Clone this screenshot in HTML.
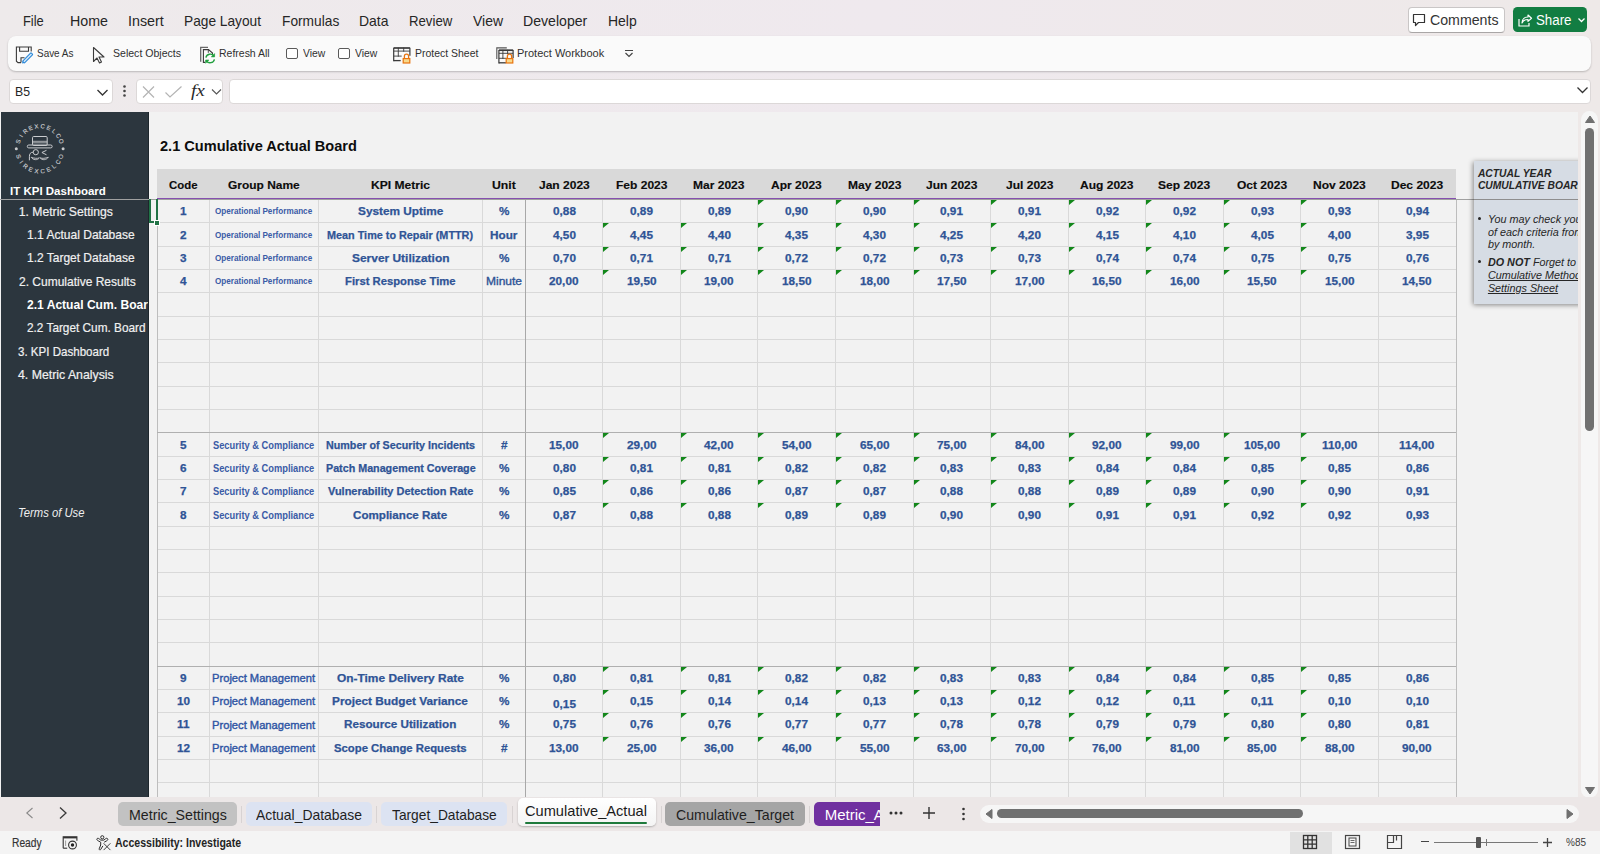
<!DOCTYPE html>
<html><head><meta charset="utf-8"><title>Excel</title>
<style>
html,body{margin:0;padding:0;}
body{width:1600px;height:854px;overflow:hidden;position:relative;background:linear-gradient(to right,#eeeaeb 0%,#efe9ee 55%,#eee9e8 100%);font-family:"Liberation Sans",sans-serif;}
.t{position:absolute;white-space:nowrap;line-height:0;font-family:"Liberation Sans",sans-serif;}
svg{overflow:visible}
</style></head><body>
<div class="t" style="left:22.50px;top:20.77px;font-size:14.5px;color:#262626;transform:scaleX(0.8881);transform-origin:0 0;">File</div>
<div class="t" style="left:70.00px;top:20.77px;font-size:14.5px;color:#262626;transform:scaleX(0.9825);transform-origin:0 0;">Home</div>
<div class="t" style="left:128.00px;top:20.77px;font-size:14.5px;color:#262626;transform:scaleX(0.9858);transform-origin:0 0;">Insert</div>
<div class="t" style="left:184.25px;top:20.77px;font-size:14.5px;color:#262626;transform:scaleX(0.9456);transform-origin:0 0;">Page Layout</div>
<div class="t" style="left:281.75px;top:20.77px;font-size:14.5px;color:#262626;transform:scaleX(0.9474);transform-origin:0 0;">Formulas</div>
<div class="t" style="left:359.25px;top:20.77px;font-size:14.5px;color:#262626;transform:scaleX(0.9632);transform-origin:0 0;">Data</div>
<div class="t" style="left:409.25px;top:20.77px;font-size:14.5px;color:#262626;transform:scaleX(0.9097);transform-origin:0 0;">Review</div>
<div class="t" style="left:473.25px;top:20.77px;font-size:14.5px;color:#262626;transform:scaleX(0.9625);transform-origin:0 0;">View</div>
<div class="t" style="left:523.25px;top:20.77px;font-size:14.5px;color:#262626;transform:scaleX(0.9721);transform-origin:0 0;">Developer</div>
<div class="t" style="left:607.50px;top:20.77px;font-size:14.5px;color:#262626;transform:scaleX(0.9641);transform-origin:0 0;">Help</div>
<div style="position:absolute;left:1407.50px;top:7.00px;width:97.00px;height:25.50px;background:#fff;border:1px solid #c9c6c6;border-bottom-color:#a9a6a6;border-radius:4px;box-sizing:border-box;"></div>
<svg style="position:absolute;left:1412px;top:13px;" width="14" height="14" viewBox="0 0 14 14"><path d="M1.5 1.5h11v8h-6l-3 3v-3h-2z" fill="none" stroke="#333" stroke-width="1.2" stroke-linejoin="round"/></svg>
<div class="t" style="left:1429.50px;top:19.75px;font-size:14px;color:#333333;transform:scaleX(1.0121);transform-origin:0 0;">Comments</div>
<div style="position:absolute;left:1513.20px;top:7.20px;width:74.30px;height:25.00px;background:#127d42;border-radius:4.5px;"></div>
<svg style="position:absolute;left:1517px;top:12px;" width="16" height="16" viewBox="0 0 16 16"><path d="M2 7v7h10v-3" fill="none" stroke="#fff" stroke-width="1.2"/><path d="M5 11c0-4 3-6 6-6V3l3.5 3.2L11 9.4V7.5c-3 0-5 1.3-6 3.5z" fill="none" stroke="#fff" stroke-width="1.2" stroke-linejoin="round"/></svg>
<div class="t" style="left:1535.60px;top:19.95px;font-size:14px;color:#fff;transform:scaleX(0.9503);transform-origin:0 0;">Share</div>
<svg style="position:absolute;left:1577px;top:16px;" width="9" height="8" viewBox="0 0 9 8"><path d="M1.5 2.5l3 3 3-3" fill="none" stroke="#fff" stroke-width="1.3"/></svg>
<div style="position:absolute;left:8.00px;top:36.00px;width:1583.00px;height:35.00px;background:#fafafa;border-radius:8px;box-shadow:0 1px 2px rgba(0,0,0,0.22);"></div>
<svg style="position:absolute;left:0;top:0;overflow:visible" width="1" height="1"><g fill="none" stroke="#3a3a3a" stroke-width="1.1"><path d="M31.2 51.5V47H16.4v14.2l1.6 1.4h3"/><path d="M19.6 47v4.3h8.9V47"/><path d="M21 62.4v-4.6h3.5"/></g><g transform="rotate(-45 27.6 57.8)"><rect x="21.6" y="56.6" width="12" height="2.6" rx="0.6" fill="#d6e9f9" stroke="#2b88d8" stroke-width="1.1"/><path d="M21.6 56.6l-2 1.3 2 1.3z" fill="#2b88d8"/></g></svg>
<div class="t" style="left:37.00px;top:53.49px;font-size:11px;color:#303030;transform:scaleX(0.9032);transform-origin:0 0;">Save As</div>
<svg style="position:absolute;left:92px;top:46px;" width="14" height="18" viewBox="0 0 14 18"><path d="M1.5 1.5v14l3.5-3.5 2.5 5 2-1-2.5-5h5z" fill="#fafafa" stroke="#3b3b3b" stroke-width="1.1" stroke-linejoin="round"/></svg>
<div class="t" style="left:112.50px;top:53.49px;font-size:11px;color:#303030;transform:scaleX(0.9588);transform-origin:0 0;">Select Objects</div>
<svg style="position:absolute;left:0;top:0;overflow:visible" width="1" height="1"><path d="M200.7 61.8V47.4h7.3" fill="none" stroke="#6a6a6a" stroke-width="1.3"/><path d="M205.2 62.4h-1.8V49.6h5.1l4 3.4v2" fill="none" stroke="#3a3a3a" stroke-width="1.1"/><path d="M208.3 49.6v3.2" stroke="#3a3a3a" stroke-width="0.9"/><path d="M205.9 57.6a4.4 4.2 0 0 1 8-1.6" fill="none" stroke="#23a040" stroke-width="1.4"/><path d="M214.6 53.6v3.3h-3.3z" fill="#23a040" stroke="#23a040" stroke-width="0.6"/><path d="M214.4 59.3a4.4 4.2 0 0 1-8 1.6" fill="none" stroke="#23a040" stroke-width="1.4"/><path d="M205.6 63.3v-3.3h3.3z" fill="#23a040" stroke="#23a040" stroke-width="0.6"/></svg>
<div class="t" style="left:219.25px;top:53.49px;font-size:11px;color:#303030;transform:scaleX(0.9527);transform-origin:0 0;">Refresh All</div>
<div style="position:absolute;left:285.75px;top:48.00px;width:11.75px;height:11.25px;border:1px solid #5a5a5a;border-radius:2px;box-sizing:border-box;background:#fff;"></div>
<div class="t" style="left:302.50px;top:53.49px;font-size:11px;color:#303030;transform:scaleX(0.9437);transform-origin:0 0;">View</div>
<div style="position:absolute;left:338.25px;top:48.00px;width:11.25px;height:11.25px;border:1px solid #5a5a5a;border-radius:2px;box-sizing:border-box;background:#fff;"></div>
<div class="t" style="left:355.00px;top:53.49px;font-size:11px;color:#303030;transform:scaleX(0.9437);transform-origin:0 0;">View</div>
<svg style="position:absolute;left:393px;top:46.8px;" width="18" height="17" viewBox="0 0 18 17"><g transform="translate(0,0)" fill="none" stroke="#3a3a3a"><path d="M0.7 1h16.2" stroke-width="1.7"/><path d="M0.7 0.7v13.6M16.9 0.7v8" stroke-width="1.2"/><path d="M5.3 0.7v9M10.7 0.7v4M0.7 4.1h16.2M0.7 9.1h8" stroke-width="0.9"/><path d="M0.7 13.6h7" stroke-width="1.3"/></g><rect x="10.2" y="11.6" width="6.6" height="4.4" fill="#f7d98c" stroke="#e8730e" stroke-width="1.2"/><path d="M11.4 11.6V9.3a2.1 2.1 0 0 1 4.2 0v2.3" fill="none" stroke="#e8730e" stroke-width="1.3"/></svg>
<div class="t" style="left:414.60px;top:53.49px;font-size:11px;color:#303030;transform:scaleX(0.9512);transform-origin:0 0;">Protect Sheet</div>
<svg style="position:absolute;left:495.8px;top:46.6px;" width="18" height="17" viewBox="0 0 18 17"><path d="M0.8 12V0.9h10" fill="none" stroke="#555" stroke-width="1.1"/><g transform="translate(2.2,2.2)" fill="none" stroke="#3a3a3a"><path d="M0.7 1h14.2" stroke-width="1.7"/><path d="M0.7 0.7v13.6M14.899999999999999 0.7v8" stroke-width="1.2"/><path d="M4.7 0.7v9M9.4 0.7v4M0.7 4.1h14.2M0.7 9.1h8" stroke-width="0.9"/><path d="M0.7 13.6h7" stroke-width="1.3"/></g><rect x="10.2" y="11.6" width="6.6" height="4.4" fill="#f7d98c" stroke="#e8730e" stroke-width="1.2"/><path d="M11.4 11.6V9.3a2.1 2.1 0 0 1 4.2 0v2.3" fill="none" stroke="#e8730e" stroke-width="1.3"/></svg>
<div class="t" style="left:517.00px;top:53.49px;font-size:11px;color:#303030;">Protect Workbook</div>
<svg style="position:absolute;left:624px;top:49px;" width="10" height="9" viewBox="0 0 10 9"><path d="M1 1.5h8M1.5 4l3.5 3.5L8.5 4" fill="none" stroke="#444" stroke-width="1.2"/></svg>
<div style="position:absolute;left:9.00px;top:79.00px;width:104.00px;height:24.50px;background:#fff;border:1px solid #dcd8d8;border-radius:4px;box-sizing:border-box;"></div>
<div class="t" style="left:14.75px;top:91.92px;font-size:13.5px;color:#242424;transform:scaleX(0.9084);transform-origin:0 0;">B5</div>
<svg style="position:absolute;left:96px;top:88px;" width="13" height="9" viewBox="0 0 13 9"><path d="M1.5 2l5 5 5-5" fill="none" stroke="#333" stroke-width="1.3"/></svg>
<svg style="position:absolute;left:122px;top:84px;" width="5" height="14" viewBox="0 0 5 14"><circle cx="2.5" cy="2.5" r="1.3" fill="#444"/><circle cx="2.5" cy="7" r="1.3" fill="#444"/><circle cx="2.5" cy="11.5" r="1.3" fill="#444"/></svg>
<div style="position:absolute;left:135.75px;top:79.00px;width:87.50px;height:24.50px;background:#fff;border:1px solid #dcd8d8;border-radius:4px;box-sizing:border-box;"></div>
<svg style="position:absolute;left:141px;top:85px;" width="15" height="14" viewBox="0 0 15 14"><path d="M2 1.5l11 11M13 1.5l-11 11" stroke="#b4b4b4" stroke-width="1.2"/></svg>
<svg style="position:absolute;left:164px;top:85px;" width="19" height="14" viewBox="0 0 19 14"><path d="M1.5 7.5l4.5 4.5L17.5 1.5" fill="none" stroke="#b4b4b4" stroke-width="1.2"/></svg>
<div class="t" style="left:191.00px;top:90.95px;font-size:16px;font-style:italic;color:#2a2a2a;transform:scaleX(1.2053);transform-origin:0 0;font-family:'Liberation Serif',serif;">fx</div>
<svg style="position:absolute;left:211px;top:88px;" width="11" height="8" viewBox="0 0 11 8"><path d="M1 1.5l4.5 4.5 4.5-4.5" fill="none" stroke="#555" stroke-width="1.1"/></svg>
<div style="position:absolute;left:228.75px;top:79.00px;width:1362.25px;height:24.50px;background:#fff;border:1px solid #dcd8d8;border-radius:4px;box-sizing:border-box;"></div>
<svg style="position:absolute;left:1576px;top:86px;" width="13" height="9" viewBox="0 0 13 9"><path d="M1.5 1.5l5 5 5-5" fill="none" stroke="#333" stroke-width="1.3"/></svg>
<div style="position:absolute;left:0.00px;top:112.00px;width:1578.00px;height:685.40px;background:#f2f2f2;"></div>
<div style="position:absolute;left:1.00px;top:111.50px;width:147.60px;height:685.90px;background:#2c363e;border-right:1px solid #1d262c;box-sizing:border-box;"></div>
<div style="position:absolute;left:157.00px;top:169.00px;width:1299.00px;height:30.00px;background:#d9d9d9;"></div>
<div style="position:absolute;left:157.00px;top:222.33px;width:1299.00px;height:1.00px;background:#d9d9d9;"></div>
<div style="position:absolute;left:157.00px;top:245.66px;width:1299.00px;height:1.00px;background:#d9d9d9;"></div>
<div style="position:absolute;left:157.00px;top:268.99px;width:1299.00px;height:1.00px;background:#d9d9d9;"></div>
<div style="position:absolute;left:157.00px;top:292.32px;width:1299.00px;height:1.00px;background:#d9d9d9;"></div>
<div style="position:absolute;left:157.00px;top:315.65px;width:1299.00px;height:1.00px;background:#d9d9d9;"></div>
<div style="position:absolute;left:157.00px;top:338.98px;width:1299.00px;height:1.00px;background:#d9d9d9;"></div>
<div style="position:absolute;left:157.00px;top:362.31px;width:1299.00px;height:1.00px;background:#d9d9d9;"></div>
<div style="position:absolute;left:157.00px;top:385.64px;width:1299.00px;height:1.00px;background:#d9d9d9;"></div>
<div style="position:absolute;left:157.00px;top:408.97px;width:1299.00px;height:1.00px;background:#d9d9d9;"></div>
<div style="position:absolute;left:157.00px;top:432.30px;width:1299.00px;height:1.00px;background:#d9d9d9;"></div>
<div style="position:absolute;left:157.00px;top:455.63px;width:1299.00px;height:1.00px;background:#d9d9d9;"></div>
<div style="position:absolute;left:157.00px;top:478.96px;width:1299.00px;height:1.00px;background:#d9d9d9;"></div>
<div style="position:absolute;left:157.00px;top:502.29px;width:1299.00px;height:1.00px;background:#d9d9d9;"></div>
<div style="position:absolute;left:157.00px;top:525.62px;width:1299.00px;height:1.00px;background:#d9d9d9;"></div>
<div style="position:absolute;left:157.00px;top:548.95px;width:1299.00px;height:1.00px;background:#d9d9d9;"></div>
<div style="position:absolute;left:157.00px;top:572.28px;width:1299.00px;height:1.00px;background:#d9d9d9;"></div>
<div style="position:absolute;left:157.00px;top:595.61px;width:1299.00px;height:1.00px;background:#d9d9d9;"></div>
<div style="position:absolute;left:157.00px;top:618.94px;width:1299.00px;height:1.00px;background:#d9d9d9;"></div>
<div style="position:absolute;left:157.00px;top:642.27px;width:1299.00px;height:1.00px;background:#d9d9d9;"></div>
<div style="position:absolute;left:157.00px;top:665.60px;width:1299.00px;height:1.00px;background:#d9d9d9;"></div>
<div style="position:absolute;left:157.00px;top:688.93px;width:1299.00px;height:1.00px;background:#d9d9d9;"></div>
<div style="position:absolute;left:157.00px;top:712.26px;width:1299.00px;height:1.00px;background:#d9d9d9;"></div>
<div style="position:absolute;left:157.00px;top:735.59px;width:1299.00px;height:1.00px;background:#d9d9d9;"></div>
<div style="position:absolute;left:157.00px;top:758.92px;width:1299.00px;height:1.00px;background:#d9d9d9;"></div>
<div style="position:absolute;left:157.00px;top:782.25px;width:1299.00px;height:1.00px;background:#d9d9d9;"></div>
<div style="position:absolute;left:156.50px;top:199.00px;width:1.00px;height:598.40px;background:#bdbdbd;"></div>
<div style="position:absolute;left:208.80px;top:199.00px;width:1.00px;height:598.40px;background:#d9d9d9;"></div>
<div style="position:absolute;left:318.10px;top:199.00px;width:1.00px;height:598.40px;background:#d9d9d9;"></div>
<div style="position:absolute;left:482.00px;top:199.00px;width:1.00px;height:598.40px;background:#d9d9d9;"></div>
<div style="position:absolute;left:524.80px;top:199.00px;width:1.00px;height:598.40px;background:#a8a8a8;"></div>
<div style="position:absolute;left:602.36px;top:199.00px;width:1.00px;height:598.40px;background:#d9d9d9;"></div>
<div style="position:absolute;left:679.92px;top:199.00px;width:1.00px;height:598.40px;background:#d9d9d9;"></div>
<div style="position:absolute;left:757.47px;top:199.00px;width:1.00px;height:598.40px;background:#d9d9d9;"></div>
<div style="position:absolute;left:835.03px;top:199.00px;width:1.00px;height:598.40px;background:#d9d9d9;"></div>
<div style="position:absolute;left:912.59px;top:199.00px;width:1.00px;height:598.40px;background:#d9d9d9;"></div>
<div style="position:absolute;left:990.15px;top:199.00px;width:1.00px;height:598.40px;background:#d9d9d9;"></div>
<div style="position:absolute;left:1067.71px;top:199.00px;width:1.00px;height:598.40px;background:#d9d9d9;"></div>
<div style="position:absolute;left:1145.27px;top:199.00px;width:1.00px;height:598.40px;background:#d9d9d9;"></div>
<div style="position:absolute;left:1222.83px;top:199.00px;width:1.00px;height:598.40px;background:#d9d9d9;"></div>
<div style="position:absolute;left:1300.38px;top:199.00px;width:1.00px;height:598.40px;background:#d9d9d9;"></div>
<div style="position:absolute;left:1377.94px;top:199.00px;width:1.00px;height:598.40px;background:#d9d9d9;"></div>
<div style="position:absolute;left:1455.50px;top:199.00px;width:1.00px;height:598.40px;background:#bdbdbd;"></div>
<div style="position:absolute;left:157.00px;top:432.20px;width:1299.00px;height:1.20px;background:#b0b0b0;"></div>
<div style="position:absolute;left:157.00px;top:665.50px;width:1299.00px;height:1.20px;background:#b0b0b0;"></div>
<div style="position:absolute;left:0.00px;top:198.60px;width:1578.00px;height:1.00px;background:#a0a0a0;"></div>
<div style="position:absolute;left:157.00px;top:197.60px;width:1299.00px;height:1.90px;background:#8650b0;"></div>
<div class="t" style="left:168.90px;top:184.91px;font-size:11.5px;font-weight:700;color:#0d0d0d;transform:scaleX(0.9913);transform-origin:0 0;-webkit-text-stroke:0.15px #0d0d0d;">Code</div>
<div class="t" style="left:228.10px;top:184.91px;font-size:11.5px;font-weight:700;color:#0d0d0d;transform:scaleX(1.0390);transform-origin:0 0;-webkit-text-stroke:0.15px #0d0d0d;">Group Name</div>
<div class="t" style="left:371.05px;top:184.91px;font-size:11.5px;font-weight:700;color:#0d0d0d;transform:scaleX(1.0491);transform-origin:0 0;-webkit-text-stroke:0.15px #0d0d0d;">KPI Metric</div>
<div class="t" style="left:492.00px;top:184.91px;font-size:11.5px;font-weight:700;color:#0d0d0d;transform:scaleX(1.0647);transform-origin:0 0;-webkit-text-stroke:0.15px #0d0d0d;">Unit</div>
<div class="t" style="left:538.69px;top:184.91px;font-size:11.5px;font-weight:700;color:#0d0d0d;transform:scaleX(1.0450);transform-origin:0 0;-webkit-text-stroke:0.15px #0d0d0d;">Jan 2023</div>
<div class="t" style="left:615.92px;top:184.91px;font-size:11.5px;font-weight:700;color:#0d0d0d;transform:scaleX(1.0450);transform-origin:0 0;-webkit-text-stroke:0.15px #0d0d0d;">Feb 2023</div>
<div class="t" style="left:693.47px;top:184.91px;font-size:11.5px;font-weight:700;color:#0d0d0d;transform:scaleX(1.0450);transform-origin:0 0;-webkit-text-stroke:0.15px #0d0d0d;">Mar 2023</div>
<div class="t" style="left:771.37px;top:184.91px;font-size:11.5px;font-weight:700;color:#0d0d0d;transform:scaleX(1.0450);transform-origin:0 0;-webkit-text-stroke:0.15px #0d0d0d;">Apr 2023</div>
<div class="t" style="left:847.59px;top:184.91px;font-size:11.5px;font-weight:700;color:#0d0d0d;transform:scaleX(1.0450);transform-origin:0 0;-webkit-text-stroke:0.15px #0d0d0d;">May 2023</div>
<div class="t" style="left:926.15px;top:184.91px;font-size:11.5px;font-weight:700;color:#0d0d0d;transform:scaleX(1.0450);transform-origin:0 0;-webkit-text-stroke:0.15px #0d0d0d;">Jun 2023</div>
<div class="t" style="left:1005.71px;top:184.91px;font-size:11.5px;font-weight:700;color:#0d0d0d;transform:scaleX(1.0450);transform-origin:0 0;-webkit-text-stroke:0.15px #0d0d0d;">Jul 2023</div>
<div class="t" style="left:1080.27px;top:184.91px;font-size:11.5px;font-weight:700;color:#0d0d0d;transform:scaleX(1.0450);transform-origin:0 0;-webkit-text-stroke:0.15px #0d0d0d;">Aug 2023</div>
<div class="t" style="left:1158.49px;top:184.91px;font-size:11.5px;font-weight:700;color:#0d0d0d;transform:scaleX(1.0450);transform-origin:0 0;-webkit-text-stroke:0.15px #0d0d0d;">Sep 2023</div>
<div class="t" style="left:1237.05px;top:184.91px;font-size:11.5px;font-weight:700;color:#0d0d0d;transform:scaleX(1.0450);transform-origin:0 0;-webkit-text-stroke:0.15px #0d0d0d;">Oct 2023</div>
<div class="t" style="left:1313.27px;top:184.91px;font-size:11.5px;font-weight:700;color:#0d0d0d;transform:scaleX(1.0450);transform-origin:0 0;-webkit-text-stroke:0.15px #0d0d0d;">Nov 2023</div>
<div class="t" style="left:1391.16px;top:184.91px;font-size:11.5px;font-weight:700;color:#0d0d0d;transform:scaleX(1.0450);transform-origin:0 0;-webkit-text-stroke:0.15px #0d0d0d;">Dec 2023</div>
<div class="t" style="left:179.88px;top:211.22px;font-size:11.2px;font-weight:700;color:#2f5496;transform:scaleX(1.0500);transform-origin:0 0;-webkit-text-stroke:0.25px #2f5496;">1</div>
<div class="t" style="left:215.35px;top:211.22px;font-size:8.3px;font-weight:700;color:#3a5ba6;transform:scaleX(0.9801);transform-origin:0 0;">Operational Performance</div>
<div class="t" style="left:357.85px;top:211.22px;font-size:11.2px;font-weight:700;color:#2f5496;transform:scaleX(1.0554);transform-origin:0 0;-webkit-text-stroke:0.25px #2f5496;">System Uptime</div>
<div class="t" style="left:498.67px;top:211.22px;font-size:11.2px;font-weight:700;color:#2f5496;transform:scaleX(1.0500);transform-origin:0 0;-webkit-text-stroke:0.25px #2f5496;">%</div>
<div class="t" style="left:552.60px;top:211.22px;font-size:11.2px;font-weight:700;color:#2f5496;transform:scaleX(1.0530);transform-origin:0 0;-webkit-text-stroke:0.25px #2f5496;">0,88</div>
<div class="t" style="left:630.16px;top:211.22px;font-size:11.2px;font-weight:700;color:#2f5496;transform:scaleX(1.0530);transform-origin:0 0;-webkit-text-stroke:0.25px #2f5496;">0,89</div>
<div class="t" style="left:707.72px;top:211.22px;font-size:11.2px;font-weight:700;color:#2f5496;transform:scaleX(1.0530);transform-origin:0 0;-webkit-text-stroke:0.25px #2f5496;">0,89</div>
<div class="t" style="left:785.28px;top:211.22px;font-size:11.2px;font-weight:700;color:#2f5496;transform:scaleX(1.0530);transform-origin:0 0;-webkit-text-stroke:0.25px #2f5496;">0,90</div>
<div class="t" style="left:862.84px;top:211.22px;font-size:11.2px;font-weight:700;color:#2f5496;transform:scaleX(1.0530);transform-origin:0 0;-webkit-text-stroke:0.25px #2f5496;">0,90</div>
<div class="t" style="left:940.39px;top:211.22px;font-size:11.2px;font-weight:700;color:#2f5496;transform:scaleX(1.0530);transform-origin:0 0;-webkit-text-stroke:0.25px #2f5496;">0,91</div>
<div class="t" style="left:1017.95px;top:211.22px;font-size:11.2px;font-weight:700;color:#2f5496;transform:scaleX(1.0530);transform-origin:0 0;-webkit-text-stroke:0.25px #2f5496;">0,91</div>
<div class="t" style="left:1095.51px;top:211.22px;font-size:11.2px;font-weight:700;color:#2f5496;transform:scaleX(1.0530);transform-origin:0 0;-webkit-text-stroke:0.25px #2f5496;">0,92</div>
<div class="t" style="left:1173.07px;top:211.22px;font-size:11.2px;font-weight:700;color:#2f5496;transform:scaleX(1.0530);transform-origin:0 0;-webkit-text-stroke:0.25px #2f5496;">0,92</div>
<div class="t" style="left:1250.63px;top:211.22px;font-size:11.2px;font-weight:700;color:#2f5496;transform:scaleX(1.0530);transform-origin:0 0;-webkit-text-stroke:0.25px #2f5496;">0,93</div>
<div class="t" style="left:1328.19px;top:211.22px;font-size:11.2px;font-weight:700;color:#2f5496;transform:scaleX(1.0530);transform-origin:0 0;-webkit-text-stroke:0.25px #2f5496;">0,93</div>
<div class="t" style="left:1405.74px;top:211.22px;font-size:11.2px;font-weight:700;color:#2f5496;transform:scaleX(1.0530);transform-origin:0 0;-webkit-text-stroke:0.25px #2f5496;">0,94</div>
<svg style="position:absolute;left:758.4749999999999px;top:200px;" width="6" height="5" viewBox="0 0 6 5"><path d="M0 0h6L0 5z" fill="#12871a"/></svg>
<svg style="position:absolute;left:836.0333333333333px;top:200px;" width="6" height="5" viewBox="0 0 6 5"><path d="M0 0h6L0 5z" fill="#12871a"/></svg>
<svg style="position:absolute;left:913.5916666666667px;top:200px;" width="6" height="5" viewBox="0 0 6 5"><path d="M0 0h6L0 5z" fill="#12871a"/></svg>
<svg style="position:absolute;left:991.15px;top:200px;" width="6" height="5" viewBox="0 0 6 5"><path d="M0 0h6L0 5z" fill="#12871a"/></svg>
<svg style="position:absolute;left:1068.7083333333333px;top:200px;" width="6" height="5" viewBox="0 0 6 5"><path d="M0 0h6L0 5z" fill="#12871a"/></svg>
<svg style="position:absolute;left:1146.2666666666667px;top:200px;" width="6" height="5" viewBox="0 0 6 5"><path d="M0 0h6L0 5z" fill="#12871a"/></svg>
<svg style="position:absolute;left:1223.825px;top:200px;" width="6" height="5" viewBox="0 0 6 5"><path d="M0 0h6L0 5z" fill="#12871a"/></svg>
<svg style="position:absolute;left:1301.3833333333332px;top:200px;" width="6" height="5" viewBox="0 0 6 5"><path d="M0 0h6L0 5z" fill="#12871a"/></svg>
<div class="t" style="left:179.88px;top:234.55px;font-size:11.2px;font-weight:700;color:#2f5496;transform:scaleX(1.0500);transform-origin:0 0;-webkit-text-stroke:0.25px #2f5496;">2</div>
<div class="t" style="left:215.35px;top:234.55px;font-size:8.3px;font-weight:700;color:#3a5ba6;transform:scaleX(0.9801);transform-origin:0 0;">Operational Performance</div>
<div class="t" style="left:327.35px;top:234.55px;font-size:11.2px;font-weight:700;color:#2f5496;transform:scaleX(0.9682);transform-origin:0 0;-webkit-text-stroke:0.25px #2f5496;">Mean Time to Repair (MTTR)</div>
<div class="t" style="left:490.18px;top:234.55px;font-size:11.2px;font-weight:700;color:#2f5496;transform:scaleX(1.0500);transform-origin:0 0;-webkit-text-stroke:0.25px #2f5496;">Hour</div>
<div class="t" style="left:552.60px;top:234.55px;font-size:11.2px;font-weight:700;color:#2f5496;transform:scaleX(1.0530);transform-origin:0 0;-webkit-text-stroke:0.25px #2f5496;">4,50</div>
<div class="t" style="left:630.16px;top:234.55px;font-size:11.2px;font-weight:700;color:#2f5496;transform:scaleX(1.0530);transform-origin:0 0;-webkit-text-stroke:0.25px #2f5496;">4,45</div>
<div class="t" style="left:707.72px;top:234.55px;font-size:11.2px;font-weight:700;color:#2f5496;transform:scaleX(1.0530);transform-origin:0 0;-webkit-text-stroke:0.25px #2f5496;">4,40</div>
<div class="t" style="left:785.28px;top:234.55px;font-size:11.2px;font-weight:700;color:#2f5496;transform:scaleX(1.0530);transform-origin:0 0;-webkit-text-stroke:0.25px #2f5496;">4,35</div>
<div class="t" style="left:862.84px;top:234.55px;font-size:11.2px;font-weight:700;color:#2f5496;transform:scaleX(1.0530);transform-origin:0 0;-webkit-text-stroke:0.25px #2f5496;">4,30</div>
<div class="t" style="left:940.39px;top:234.55px;font-size:11.2px;font-weight:700;color:#2f5496;transform:scaleX(1.0530);transform-origin:0 0;-webkit-text-stroke:0.25px #2f5496;">4,25</div>
<div class="t" style="left:1017.95px;top:234.55px;font-size:11.2px;font-weight:700;color:#2f5496;transform:scaleX(1.0530);transform-origin:0 0;-webkit-text-stroke:0.25px #2f5496;">4,20</div>
<div class="t" style="left:1095.51px;top:234.55px;font-size:11.2px;font-weight:700;color:#2f5496;transform:scaleX(1.0530);transform-origin:0 0;-webkit-text-stroke:0.25px #2f5496;">4,15</div>
<div class="t" style="left:1173.07px;top:234.55px;font-size:11.2px;font-weight:700;color:#2f5496;transform:scaleX(1.0530);transform-origin:0 0;-webkit-text-stroke:0.25px #2f5496;">4,10</div>
<div class="t" style="left:1250.63px;top:234.55px;font-size:11.2px;font-weight:700;color:#2f5496;transform:scaleX(1.0530);transform-origin:0 0;-webkit-text-stroke:0.25px #2f5496;">4,05</div>
<div class="t" style="left:1328.19px;top:234.55px;font-size:11.2px;font-weight:700;color:#2f5496;transform:scaleX(1.0530);transform-origin:0 0;-webkit-text-stroke:0.25px #2f5496;">4,00</div>
<div class="t" style="left:1405.74px;top:234.55px;font-size:11.2px;font-weight:700;color:#2f5496;transform:scaleX(1.0530);transform-origin:0 0;-webkit-text-stroke:0.25px #2f5496;">3,95</div>
<svg style="position:absolute;left:603.3583333333333px;top:223px;" width="6" height="5" viewBox="0 0 6 5"><path d="M0 0h6L0 5z" fill="#12871a"/></svg>
<svg style="position:absolute;left:680.9166666666666px;top:223px;" width="6" height="5" viewBox="0 0 6 5"><path d="M0 0h6L0 5z" fill="#12871a"/></svg>
<svg style="position:absolute;left:758.4749999999999px;top:223px;" width="6" height="5" viewBox="0 0 6 5"><path d="M0 0h6L0 5z" fill="#12871a"/></svg>
<svg style="position:absolute;left:836.0333333333333px;top:223px;" width="6" height="5" viewBox="0 0 6 5"><path d="M0 0h6L0 5z" fill="#12871a"/></svg>
<svg style="position:absolute;left:913.5916666666667px;top:223px;" width="6" height="5" viewBox="0 0 6 5"><path d="M0 0h6L0 5z" fill="#12871a"/></svg>
<svg style="position:absolute;left:991.15px;top:223px;" width="6" height="5" viewBox="0 0 6 5"><path d="M0 0h6L0 5z" fill="#12871a"/></svg>
<svg style="position:absolute;left:1068.7083333333333px;top:223px;" width="6" height="5" viewBox="0 0 6 5"><path d="M0 0h6L0 5z" fill="#12871a"/></svg>
<svg style="position:absolute;left:1146.2666666666667px;top:223px;" width="6" height="5" viewBox="0 0 6 5"><path d="M0 0h6L0 5z" fill="#12871a"/></svg>
<svg style="position:absolute;left:1223.825px;top:223px;" width="6" height="5" viewBox="0 0 6 5"><path d="M0 0h6L0 5z" fill="#12871a"/></svg>
<svg style="position:absolute;left:1301.3833333333332px;top:223px;" width="6" height="5" viewBox="0 0 6 5"><path d="M0 0h6L0 5z" fill="#12871a"/></svg>
<div class="t" style="left:179.88px;top:257.88px;font-size:11.2px;font-weight:700;color:#2f5496;transform:scaleX(1.0500);transform-origin:0 0;-webkit-text-stroke:0.25px #2f5496;">3</div>
<div class="t" style="left:215.35px;top:257.88px;font-size:8.3px;font-weight:700;color:#3a5ba6;transform:scaleX(0.9801);transform-origin:0 0;">Operational Performance</div>
<div class="t" style="left:351.75px;top:257.88px;font-size:11.2px;font-weight:700;color:#2f5496;transform:scaleX(1.0668);transform-origin:0 0;-webkit-text-stroke:0.25px #2f5496;">Server Utilization</div>
<div class="t" style="left:498.67px;top:257.88px;font-size:11.2px;font-weight:700;color:#2f5496;transform:scaleX(1.0500);transform-origin:0 0;-webkit-text-stroke:0.25px #2f5496;">%</div>
<div class="t" style="left:552.60px;top:257.88px;font-size:11.2px;font-weight:700;color:#2f5496;transform:scaleX(1.0530);transform-origin:0 0;-webkit-text-stroke:0.25px #2f5496;">0,70</div>
<div class="t" style="left:630.16px;top:257.88px;font-size:11.2px;font-weight:700;color:#2f5496;transform:scaleX(1.0530);transform-origin:0 0;-webkit-text-stroke:0.25px #2f5496;">0,71</div>
<div class="t" style="left:707.72px;top:257.88px;font-size:11.2px;font-weight:700;color:#2f5496;transform:scaleX(1.0530);transform-origin:0 0;-webkit-text-stroke:0.25px #2f5496;">0,71</div>
<div class="t" style="left:785.28px;top:257.88px;font-size:11.2px;font-weight:700;color:#2f5496;transform:scaleX(1.0530);transform-origin:0 0;-webkit-text-stroke:0.25px #2f5496;">0,72</div>
<div class="t" style="left:862.84px;top:257.88px;font-size:11.2px;font-weight:700;color:#2f5496;transform:scaleX(1.0530);transform-origin:0 0;-webkit-text-stroke:0.25px #2f5496;">0,72</div>
<div class="t" style="left:940.39px;top:257.88px;font-size:11.2px;font-weight:700;color:#2f5496;transform:scaleX(1.0530);transform-origin:0 0;-webkit-text-stroke:0.25px #2f5496;">0,73</div>
<div class="t" style="left:1017.95px;top:257.88px;font-size:11.2px;font-weight:700;color:#2f5496;transform:scaleX(1.0530);transform-origin:0 0;-webkit-text-stroke:0.25px #2f5496;">0,73</div>
<div class="t" style="left:1095.51px;top:257.88px;font-size:11.2px;font-weight:700;color:#2f5496;transform:scaleX(1.0530);transform-origin:0 0;-webkit-text-stroke:0.25px #2f5496;">0,74</div>
<div class="t" style="left:1173.07px;top:257.88px;font-size:11.2px;font-weight:700;color:#2f5496;transform:scaleX(1.0530);transform-origin:0 0;-webkit-text-stroke:0.25px #2f5496;">0,74</div>
<div class="t" style="left:1250.63px;top:257.88px;font-size:11.2px;font-weight:700;color:#2f5496;transform:scaleX(1.0530);transform-origin:0 0;-webkit-text-stroke:0.25px #2f5496;">0,75</div>
<div class="t" style="left:1328.19px;top:257.88px;font-size:11.2px;font-weight:700;color:#2f5496;transform:scaleX(1.0530);transform-origin:0 0;-webkit-text-stroke:0.25px #2f5496;">0,75</div>
<div class="t" style="left:1405.74px;top:257.88px;font-size:11.2px;font-weight:700;color:#2f5496;transform:scaleX(1.0530);transform-origin:0 0;-webkit-text-stroke:0.25px #2f5496;">0,76</div>
<svg style="position:absolute;left:603.3583333333333px;top:247px;" width="6" height="5" viewBox="0 0 6 5"><path d="M0 0h6L0 5z" fill="#12871a"/></svg>
<svg style="position:absolute;left:680.9166666666666px;top:247px;" width="6" height="5" viewBox="0 0 6 5"><path d="M0 0h6L0 5z" fill="#12871a"/></svg>
<svg style="position:absolute;left:758.4749999999999px;top:247px;" width="6" height="5" viewBox="0 0 6 5"><path d="M0 0h6L0 5z" fill="#12871a"/></svg>
<svg style="position:absolute;left:836.0333333333333px;top:247px;" width="6" height="5" viewBox="0 0 6 5"><path d="M0 0h6L0 5z" fill="#12871a"/></svg>
<svg style="position:absolute;left:913.5916666666667px;top:247px;" width="6" height="5" viewBox="0 0 6 5"><path d="M0 0h6L0 5z" fill="#12871a"/></svg>
<svg style="position:absolute;left:991.15px;top:247px;" width="6" height="5" viewBox="0 0 6 5"><path d="M0 0h6L0 5z" fill="#12871a"/></svg>
<svg style="position:absolute;left:1068.7083333333333px;top:247px;" width="6" height="5" viewBox="0 0 6 5"><path d="M0 0h6L0 5z" fill="#12871a"/></svg>
<svg style="position:absolute;left:1146.2666666666667px;top:247px;" width="6" height="5" viewBox="0 0 6 5"><path d="M0 0h6L0 5z" fill="#12871a"/></svg>
<svg style="position:absolute;left:1223.825px;top:247px;" width="6" height="5" viewBox="0 0 6 5"><path d="M0 0h6L0 5z" fill="#12871a"/></svg>
<svg style="position:absolute;left:1301.3833333333332px;top:247px;" width="6" height="5" viewBox="0 0 6 5"><path d="M0 0h6L0 5z" fill="#12871a"/></svg>
<div class="t" style="left:179.88px;top:281.21px;font-size:11.2px;font-weight:700;color:#2f5496;transform:scaleX(1.0500);transform-origin:0 0;-webkit-text-stroke:0.25px #2f5496;">4</div>
<div class="t" style="left:215.35px;top:281.21px;font-size:8.3px;font-weight:700;color:#3a5ba6;transform:scaleX(0.9801);transform-origin:0 0;">Operational Performance</div>
<div class="t" style="left:345.10px;top:281.21px;font-size:11.2px;font-weight:700;color:#2f5496;transform:scaleX(1.0067);transform-origin:0 0;-webkit-text-stroke:0.25px #2f5496;">First Response Time</div>
<div class="t" style="left:485.90px;top:281.28px;font-size:11px;color:#2f5496;transform:scaleX(1.0904);transform-origin:0 0;-webkit-text-stroke:0.35px #2f5496;">Minute</div>
<div class="t" style="left:549.32px;top:281.21px;font-size:11.2px;font-weight:700;color:#2f5496;transform:scaleX(1.0530);transform-origin:0 0;-webkit-text-stroke:0.25px #2f5496;">20,00</div>
<div class="t" style="left:626.88px;top:281.21px;font-size:11.2px;font-weight:700;color:#2f5496;transform:scaleX(1.0530);transform-origin:0 0;-webkit-text-stroke:0.25px #2f5496;">19,50</div>
<div class="t" style="left:704.44px;top:281.21px;font-size:11.2px;font-weight:700;color:#2f5496;transform:scaleX(1.0530);transform-origin:0 0;-webkit-text-stroke:0.25px #2f5496;">19,00</div>
<div class="t" style="left:782.00px;top:281.21px;font-size:11.2px;font-weight:700;color:#2f5496;transform:scaleX(1.0530);transform-origin:0 0;-webkit-text-stroke:0.25px #2f5496;">18,50</div>
<div class="t" style="left:859.56px;top:281.21px;font-size:11.2px;font-weight:700;color:#2f5496;transform:scaleX(1.0530);transform-origin:0 0;-webkit-text-stroke:0.25px #2f5496;">18,00</div>
<div class="t" style="left:937.11px;top:281.21px;font-size:11.2px;font-weight:700;color:#2f5496;transform:scaleX(1.0530);transform-origin:0 0;-webkit-text-stroke:0.25px #2f5496;">17,50</div>
<div class="t" style="left:1014.67px;top:281.21px;font-size:11.2px;font-weight:700;color:#2f5496;transform:scaleX(1.0530);transform-origin:0 0;-webkit-text-stroke:0.25px #2f5496;">17,00</div>
<div class="t" style="left:1092.23px;top:281.21px;font-size:11.2px;font-weight:700;color:#2f5496;transform:scaleX(1.0530);transform-origin:0 0;-webkit-text-stroke:0.25px #2f5496;">16,50</div>
<div class="t" style="left:1169.79px;top:281.21px;font-size:11.2px;font-weight:700;color:#2f5496;transform:scaleX(1.0530);transform-origin:0 0;-webkit-text-stroke:0.25px #2f5496;">16,00</div>
<div class="t" style="left:1247.35px;top:281.21px;font-size:11.2px;font-weight:700;color:#2f5496;transform:scaleX(1.0530);transform-origin:0 0;-webkit-text-stroke:0.25px #2f5496;">15,50</div>
<div class="t" style="left:1324.91px;top:281.21px;font-size:11.2px;font-weight:700;color:#2f5496;transform:scaleX(1.0530);transform-origin:0 0;-webkit-text-stroke:0.25px #2f5496;">15,00</div>
<div class="t" style="left:1402.46px;top:281.21px;font-size:11.2px;font-weight:700;color:#2f5496;transform:scaleX(1.0530);transform-origin:0 0;-webkit-text-stroke:0.25px #2f5496;">14,50</div>
<svg style="position:absolute;left:603.3583333333333px;top:270px;" width="6" height="5" viewBox="0 0 6 5"><path d="M0 0h6L0 5z" fill="#12871a"/></svg>
<svg style="position:absolute;left:680.9166666666666px;top:270px;" width="6" height="5" viewBox="0 0 6 5"><path d="M0 0h6L0 5z" fill="#12871a"/></svg>
<svg style="position:absolute;left:758.4749999999999px;top:270px;" width="6" height="5" viewBox="0 0 6 5"><path d="M0 0h6L0 5z" fill="#12871a"/></svg>
<svg style="position:absolute;left:836.0333333333333px;top:270px;" width="6" height="5" viewBox="0 0 6 5"><path d="M0 0h6L0 5z" fill="#12871a"/></svg>
<svg style="position:absolute;left:913.5916666666667px;top:270px;" width="6" height="5" viewBox="0 0 6 5"><path d="M0 0h6L0 5z" fill="#12871a"/></svg>
<svg style="position:absolute;left:991.15px;top:270px;" width="6" height="5" viewBox="0 0 6 5"><path d="M0 0h6L0 5z" fill="#12871a"/></svg>
<svg style="position:absolute;left:1068.7083333333333px;top:270px;" width="6" height="5" viewBox="0 0 6 5"><path d="M0 0h6L0 5z" fill="#12871a"/></svg>
<svg style="position:absolute;left:1146.2666666666667px;top:270px;" width="6" height="5" viewBox="0 0 6 5"><path d="M0 0h6L0 5z" fill="#12871a"/></svg>
<svg style="position:absolute;left:1223.825px;top:270px;" width="6" height="5" viewBox="0 0 6 5"><path d="M0 0h6L0 5z" fill="#12871a"/></svg>
<svg style="position:absolute;left:1301.3833333333332px;top:270px;" width="6" height="5" viewBox="0 0 6 5"><path d="M0 0h6L0 5z" fill="#12871a"/></svg>
<div class="t" style="left:179.88px;top:444.52px;font-size:11.2px;font-weight:700;color:#2f5496;transform:scaleX(1.0500);transform-origin:0 0;-webkit-text-stroke:0.25px #2f5496;">5</div>
<div class="t" style="left:213.30px;top:445.83px;font-size:10.3px;font-weight:700;color:#3a5ba6;transform:scaleX(0.9029);transform-origin:0 0;">Security &amp; Compliance</div>
<div class="t" style="left:325.95px;top:444.52px;font-size:11.2px;font-weight:700;color:#2f5496;transform:scaleX(0.9590);transform-origin:0 0;-webkit-text-stroke:0.25px #2f5496;">Number of Security Incidents</div>
<div class="t" style="left:500.63px;top:444.52px;font-size:11.2px;font-weight:700;color:#2f5496;transform:scaleX(1.0500);transform-origin:0 0;-webkit-text-stroke:0.25px #2f5496;">#</div>
<div class="t" style="left:549.32px;top:444.52px;font-size:11.2px;font-weight:700;color:#2f5496;transform:scaleX(1.0530);transform-origin:0 0;-webkit-text-stroke:0.25px #2f5496;">15,00</div>
<div class="t" style="left:626.88px;top:444.52px;font-size:11.2px;font-weight:700;color:#2f5496;transform:scaleX(1.0530);transform-origin:0 0;-webkit-text-stroke:0.25px #2f5496;">29,00</div>
<div class="t" style="left:704.44px;top:444.52px;font-size:11.2px;font-weight:700;color:#2f5496;transform:scaleX(1.0530);transform-origin:0 0;-webkit-text-stroke:0.25px #2f5496;">42,00</div>
<div class="t" style="left:782.00px;top:444.52px;font-size:11.2px;font-weight:700;color:#2f5496;transform:scaleX(1.0530);transform-origin:0 0;-webkit-text-stroke:0.25px #2f5496;">54,00</div>
<div class="t" style="left:859.56px;top:444.52px;font-size:11.2px;font-weight:700;color:#2f5496;transform:scaleX(1.0530);transform-origin:0 0;-webkit-text-stroke:0.25px #2f5496;">65,00</div>
<div class="t" style="left:937.11px;top:444.52px;font-size:11.2px;font-weight:700;color:#2f5496;transform:scaleX(1.0530);transform-origin:0 0;-webkit-text-stroke:0.25px #2f5496;">75,00</div>
<div class="t" style="left:1014.67px;top:444.52px;font-size:11.2px;font-weight:700;color:#2f5496;transform:scaleX(1.0530);transform-origin:0 0;-webkit-text-stroke:0.25px #2f5496;">84,00</div>
<div class="t" style="left:1092.23px;top:444.52px;font-size:11.2px;font-weight:700;color:#2f5496;transform:scaleX(1.0530);transform-origin:0 0;-webkit-text-stroke:0.25px #2f5496;">92,00</div>
<div class="t" style="left:1169.79px;top:444.52px;font-size:11.2px;font-weight:700;color:#2f5496;transform:scaleX(1.0530);transform-origin:0 0;-webkit-text-stroke:0.25px #2f5496;">99,00</div>
<div class="t" style="left:1244.07px;top:444.52px;font-size:11.2px;font-weight:700;color:#2f5496;transform:scaleX(1.0530);transform-origin:0 0;-webkit-text-stroke:0.25px #2f5496;">105,00</div>
<div class="t" style="left:1321.63px;top:444.52px;font-size:11.2px;font-weight:700;color:#2f5496;transform:scaleX(1.0530);transform-origin:0 0;-webkit-text-stroke:0.25px #2f5496;">110,00</div>
<div class="t" style="left:1399.18px;top:444.52px;font-size:11.2px;font-weight:700;color:#2f5496;transform:scaleX(1.0530);transform-origin:0 0;-webkit-text-stroke:0.25px #2f5496;">114,00</div>
<svg style="position:absolute;left:603.3583333333333px;top:433px;" width="6" height="5" viewBox="0 0 6 5"><path d="M0 0h6L0 5z" fill="#12871a"/></svg>
<svg style="position:absolute;left:680.9166666666666px;top:433px;" width="6" height="5" viewBox="0 0 6 5"><path d="M0 0h6L0 5z" fill="#12871a"/></svg>
<svg style="position:absolute;left:758.4749999999999px;top:433px;" width="6" height="5" viewBox="0 0 6 5"><path d="M0 0h6L0 5z" fill="#12871a"/></svg>
<svg style="position:absolute;left:836.0333333333333px;top:433px;" width="6" height="5" viewBox="0 0 6 5"><path d="M0 0h6L0 5z" fill="#12871a"/></svg>
<svg style="position:absolute;left:913.5916666666667px;top:433px;" width="6" height="5" viewBox="0 0 6 5"><path d="M0 0h6L0 5z" fill="#12871a"/></svg>
<svg style="position:absolute;left:991.15px;top:433px;" width="6" height="5" viewBox="0 0 6 5"><path d="M0 0h6L0 5z" fill="#12871a"/></svg>
<svg style="position:absolute;left:1068.7083333333333px;top:433px;" width="6" height="5" viewBox="0 0 6 5"><path d="M0 0h6L0 5z" fill="#12871a"/></svg>
<svg style="position:absolute;left:1146.2666666666667px;top:433px;" width="6" height="5" viewBox="0 0 6 5"><path d="M0 0h6L0 5z" fill="#12871a"/></svg>
<svg style="position:absolute;left:1223.825px;top:433px;" width="6" height="5" viewBox="0 0 6 5"><path d="M0 0h6L0 5z" fill="#12871a"/></svg>
<svg style="position:absolute;left:1301.3833333333332px;top:433px;" width="6" height="5" viewBox="0 0 6 5"><path d="M0 0h6L0 5z" fill="#12871a"/></svg>
<div class="t" style="left:179.88px;top:467.85px;font-size:11.2px;font-weight:700;color:#2f5496;transform:scaleX(1.0500);transform-origin:0 0;-webkit-text-stroke:0.25px #2f5496;">6</div>
<div class="t" style="left:213.30px;top:469.16px;font-size:10.3px;font-weight:700;color:#3a5ba6;transform:scaleX(0.9029);transform-origin:0 0;">Security &amp; Compliance</div>
<div class="t" style="left:325.65px;top:467.85px;font-size:11.2px;font-weight:700;color:#2f5496;transform:scaleX(0.9589);transform-origin:0 0;-webkit-text-stroke:0.25px #2f5496;">Patch Management Coverage</div>
<div class="t" style="left:498.67px;top:467.85px;font-size:11.2px;font-weight:700;color:#2f5496;transform:scaleX(1.0500);transform-origin:0 0;-webkit-text-stroke:0.25px #2f5496;">%</div>
<div class="t" style="left:552.60px;top:467.85px;font-size:11.2px;font-weight:700;color:#2f5496;transform:scaleX(1.0530);transform-origin:0 0;-webkit-text-stroke:0.25px #2f5496;">0,80</div>
<div class="t" style="left:630.16px;top:467.85px;font-size:11.2px;font-weight:700;color:#2f5496;transform:scaleX(1.0530);transform-origin:0 0;-webkit-text-stroke:0.25px #2f5496;">0,81</div>
<div class="t" style="left:707.72px;top:467.85px;font-size:11.2px;font-weight:700;color:#2f5496;transform:scaleX(1.0530);transform-origin:0 0;-webkit-text-stroke:0.25px #2f5496;">0,81</div>
<div class="t" style="left:785.28px;top:467.85px;font-size:11.2px;font-weight:700;color:#2f5496;transform:scaleX(1.0530);transform-origin:0 0;-webkit-text-stroke:0.25px #2f5496;">0,82</div>
<div class="t" style="left:862.84px;top:467.85px;font-size:11.2px;font-weight:700;color:#2f5496;transform:scaleX(1.0530);transform-origin:0 0;-webkit-text-stroke:0.25px #2f5496;">0,82</div>
<div class="t" style="left:940.39px;top:467.85px;font-size:11.2px;font-weight:700;color:#2f5496;transform:scaleX(1.0530);transform-origin:0 0;-webkit-text-stroke:0.25px #2f5496;">0,83</div>
<div class="t" style="left:1017.95px;top:467.85px;font-size:11.2px;font-weight:700;color:#2f5496;transform:scaleX(1.0530);transform-origin:0 0;-webkit-text-stroke:0.25px #2f5496;">0,83</div>
<div class="t" style="left:1095.51px;top:467.85px;font-size:11.2px;font-weight:700;color:#2f5496;transform:scaleX(1.0530);transform-origin:0 0;-webkit-text-stroke:0.25px #2f5496;">0,84</div>
<div class="t" style="left:1173.07px;top:467.85px;font-size:11.2px;font-weight:700;color:#2f5496;transform:scaleX(1.0530);transform-origin:0 0;-webkit-text-stroke:0.25px #2f5496;">0,84</div>
<div class="t" style="left:1250.63px;top:467.85px;font-size:11.2px;font-weight:700;color:#2f5496;transform:scaleX(1.0530);transform-origin:0 0;-webkit-text-stroke:0.25px #2f5496;">0,85</div>
<div class="t" style="left:1328.19px;top:467.85px;font-size:11.2px;font-weight:700;color:#2f5496;transform:scaleX(1.0530);transform-origin:0 0;-webkit-text-stroke:0.25px #2f5496;">0,85</div>
<div class="t" style="left:1405.74px;top:467.85px;font-size:11.2px;font-weight:700;color:#2f5496;transform:scaleX(1.0530);transform-origin:0 0;-webkit-text-stroke:0.25px #2f5496;">0,86</div>
<svg style="position:absolute;left:603.3583333333333px;top:457px;" width="6" height="5" viewBox="0 0 6 5"><path d="M0 0h6L0 5z" fill="#12871a"/></svg>
<svg style="position:absolute;left:680.9166666666666px;top:457px;" width="6" height="5" viewBox="0 0 6 5"><path d="M0 0h6L0 5z" fill="#12871a"/></svg>
<svg style="position:absolute;left:758.4749999999999px;top:457px;" width="6" height="5" viewBox="0 0 6 5"><path d="M0 0h6L0 5z" fill="#12871a"/></svg>
<svg style="position:absolute;left:836.0333333333333px;top:457px;" width="6" height="5" viewBox="0 0 6 5"><path d="M0 0h6L0 5z" fill="#12871a"/></svg>
<svg style="position:absolute;left:913.5916666666667px;top:457px;" width="6" height="5" viewBox="0 0 6 5"><path d="M0 0h6L0 5z" fill="#12871a"/></svg>
<svg style="position:absolute;left:991.15px;top:457px;" width="6" height="5" viewBox="0 0 6 5"><path d="M0 0h6L0 5z" fill="#12871a"/></svg>
<svg style="position:absolute;left:1068.7083333333333px;top:457px;" width="6" height="5" viewBox="0 0 6 5"><path d="M0 0h6L0 5z" fill="#12871a"/></svg>
<svg style="position:absolute;left:1146.2666666666667px;top:457px;" width="6" height="5" viewBox="0 0 6 5"><path d="M0 0h6L0 5z" fill="#12871a"/></svg>
<svg style="position:absolute;left:1223.825px;top:457px;" width="6" height="5" viewBox="0 0 6 5"><path d="M0 0h6L0 5z" fill="#12871a"/></svg>
<svg style="position:absolute;left:1301.3833333333332px;top:457px;" width="6" height="5" viewBox="0 0 6 5"><path d="M0 0h6L0 5z" fill="#12871a"/></svg>
<div class="t" style="left:179.88px;top:491.18px;font-size:11.2px;font-weight:700;color:#2f5496;transform:scaleX(1.0500);transform-origin:0 0;-webkit-text-stroke:0.25px #2f5496;">7</div>
<div class="t" style="left:213.30px;top:492.49px;font-size:10.3px;font-weight:700;color:#3a5ba6;transform:scaleX(0.9029);transform-origin:0 0;">Security &amp; Compliance</div>
<div class="t" style="left:327.60px;top:491.18px;font-size:11.2px;font-weight:700;color:#2f5496;transform:scaleX(0.9809);transform-origin:0 0;-webkit-text-stroke:0.25px #2f5496;">Vulnerability Detection Rate</div>
<div class="t" style="left:498.67px;top:491.18px;font-size:11.2px;font-weight:700;color:#2f5496;transform:scaleX(1.0500);transform-origin:0 0;-webkit-text-stroke:0.25px #2f5496;">%</div>
<div class="t" style="left:552.60px;top:491.18px;font-size:11.2px;font-weight:700;color:#2f5496;transform:scaleX(1.0530);transform-origin:0 0;-webkit-text-stroke:0.25px #2f5496;">0,85</div>
<div class="t" style="left:630.16px;top:491.18px;font-size:11.2px;font-weight:700;color:#2f5496;transform:scaleX(1.0530);transform-origin:0 0;-webkit-text-stroke:0.25px #2f5496;">0,86</div>
<div class="t" style="left:707.72px;top:491.18px;font-size:11.2px;font-weight:700;color:#2f5496;transform:scaleX(1.0530);transform-origin:0 0;-webkit-text-stroke:0.25px #2f5496;">0,86</div>
<div class="t" style="left:785.28px;top:491.18px;font-size:11.2px;font-weight:700;color:#2f5496;transform:scaleX(1.0530);transform-origin:0 0;-webkit-text-stroke:0.25px #2f5496;">0,87</div>
<div class="t" style="left:862.84px;top:491.18px;font-size:11.2px;font-weight:700;color:#2f5496;transform:scaleX(1.0530);transform-origin:0 0;-webkit-text-stroke:0.25px #2f5496;">0,87</div>
<div class="t" style="left:940.39px;top:491.18px;font-size:11.2px;font-weight:700;color:#2f5496;transform:scaleX(1.0530);transform-origin:0 0;-webkit-text-stroke:0.25px #2f5496;">0,88</div>
<div class="t" style="left:1017.95px;top:491.18px;font-size:11.2px;font-weight:700;color:#2f5496;transform:scaleX(1.0530);transform-origin:0 0;-webkit-text-stroke:0.25px #2f5496;">0,88</div>
<div class="t" style="left:1095.51px;top:491.18px;font-size:11.2px;font-weight:700;color:#2f5496;transform:scaleX(1.0530);transform-origin:0 0;-webkit-text-stroke:0.25px #2f5496;">0,89</div>
<div class="t" style="left:1173.07px;top:491.18px;font-size:11.2px;font-weight:700;color:#2f5496;transform:scaleX(1.0530);transform-origin:0 0;-webkit-text-stroke:0.25px #2f5496;">0,89</div>
<div class="t" style="left:1250.63px;top:491.18px;font-size:11.2px;font-weight:700;color:#2f5496;transform:scaleX(1.0530);transform-origin:0 0;-webkit-text-stroke:0.25px #2f5496;">0,90</div>
<div class="t" style="left:1328.19px;top:491.18px;font-size:11.2px;font-weight:700;color:#2f5496;transform:scaleX(1.0530);transform-origin:0 0;-webkit-text-stroke:0.25px #2f5496;">0,90</div>
<div class="t" style="left:1405.74px;top:491.18px;font-size:11.2px;font-weight:700;color:#2f5496;transform:scaleX(1.0530);transform-origin:0 0;-webkit-text-stroke:0.25px #2f5496;">0,91</div>
<svg style="position:absolute;left:603.3583333333333px;top:480px;" width="6" height="5" viewBox="0 0 6 5"><path d="M0 0h6L0 5z" fill="#12871a"/></svg>
<svg style="position:absolute;left:680.9166666666666px;top:480px;" width="6" height="5" viewBox="0 0 6 5"><path d="M0 0h6L0 5z" fill="#12871a"/></svg>
<svg style="position:absolute;left:758.4749999999999px;top:480px;" width="6" height="5" viewBox="0 0 6 5"><path d="M0 0h6L0 5z" fill="#12871a"/></svg>
<svg style="position:absolute;left:836.0333333333333px;top:480px;" width="6" height="5" viewBox="0 0 6 5"><path d="M0 0h6L0 5z" fill="#12871a"/></svg>
<svg style="position:absolute;left:913.5916666666667px;top:480px;" width="6" height="5" viewBox="0 0 6 5"><path d="M0 0h6L0 5z" fill="#12871a"/></svg>
<svg style="position:absolute;left:991.15px;top:480px;" width="6" height="5" viewBox="0 0 6 5"><path d="M0 0h6L0 5z" fill="#12871a"/></svg>
<svg style="position:absolute;left:1068.7083333333333px;top:480px;" width="6" height="5" viewBox="0 0 6 5"><path d="M0 0h6L0 5z" fill="#12871a"/></svg>
<svg style="position:absolute;left:1146.2666666666667px;top:480px;" width="6" height="5" viewBox="0 0 6 5"><path d="M0 0h6L0 5z" fill="#12871a"/></svg>
<svg style="position:absolute;left:1223.825px;top:480px;" width="6" height="5" viewBox="0 0 6 5"><path d="M0 0h6L0 5z" fill="#12871a"/></svg>
<svg style="position:absolute;left:1301.3833333333332px;top:480px;" width="6" height="5" viewBox="0 0 6 5"><path d="M0 0h6L0 5z" fill="#12871a"/></svg>
<div class="t" style="left:179.88px;top:514.51px;font-size:11.2px;font-weight:700;color:#2f5496;transform:scaleX(1.0500);transform-origin:0 0;-webkit-text-stroke:0.25px #2f5496;">8</div>
<div class="t" style="left:213.30px;top:515.82px;font-size:10.3px;font-weight:700;color:#3a5ba6;transform:scaleX(0.9029);transform-origin:0 0;">Security &amp; Compliance</div>
<div class="t" style="left:353.40px;top:514.51px;font-size:11.2px;font-weight:700;color:#2f5496;transform:scaleX(1.0378);transform-origin:0 0;-webkit-text-stroke:0.25px #2f5496;">Compliance Rate</div>
<div class="t" style="left:498.67px;top:514.51px;font-size:11.2px;font-weight:700;color:#2f5496;transform:scaleX(1.0500);transform-origin:0 0;-webkit-text-stroke:0.25px #2f5496;">%</div>
<div class="t" style="left:552.60px;top:514.51px;font-size:11.2px;font-weight:700;color:#2f5496;transform:scaleX(1.0530);transform-origin:0 0;-webkit-text-stroke:0.25px #2f5496;">0,87</div>
<div class="t" style="left:630.16px;top:514.51px;font-size:11.2px;font-weight:700;color:#2f5496;transform:scaleX(1.0530);transform-origin:0 0;-webkit-text-stroke:0.25px #2f5496;">0,88</div>
<div class="t" style="left:707.72px;top:514.51px;font-size:11.2px;font-weight:700;color:#2f5496;transform:scaleX(1.0530);transform-origin:0 0;-webkit-text-stroke:0.25px #2f5496;">0,88</div>
<div class="t" style="left:785.28px;top:514.51px;font-size:11.2px;font-weight:700;color:#2f5496;transform:scaleX(1.0530);transform-origin:0 0;-webkit-text-stroke:0.25px #2f5496;">0,89</div>
<div class="t" style="left:862.84px;top:514.51px;font-size:11.2px;font-weight:700;color:#2f5496;transform:scaleX(1.0530);transform-origin:0 0;-webkit-text-stroke:0.25px #2f5496;">0,89</div>
<div class="t" style="left:940.39px;top:514.51px;font-size:11.2px;font-weight:700;color:#2f5496;transform:scaleX(1.0530);transform-origin:0 0;-webkit-text-stroke:0.25px #2f5496;">0,90</div>
<div class="t" style="left:1017.95px;top:514.51px;font-size:11.2px;font-weight:700;color:#2f5496;transform:scaleX(1.0530);transform-origin:0 0;-webkit-text-stroke:0.25px #2f5496;">0,90</div>
<div class="t" style="left:1095.51px;top:514.51px;font-size:11.2px;font-weight:700;color:#2f5496;transform:scaleX(1.0530);transform-origin:0 0;-webkit-text-stroke:0.25px #2f5496;">0,91</div>
<div class="t" style="left:1173.07px;top:514.51px;font-size:11.2px;font-weight:700;color:#2f5496;transform:scaleX(1.0530);transform-origin:0 0;-webkit-text-stroke:0.25px #2f5496;">0,91</div>
<div class="t" style="left:1250.63px;top:514.51px;font-size:11.2px;font-weight:700;color:#2f5496;transform:scaleX(1.0530);transform-origin:0 0;-webkit-text-stroke:0.25px #2f5496;">0,92</div>
<div class="t" style="left:1328.19px;top:514.51px;font-size:11.2px;font-weight:700;color:#2f5496;transform:scaleX(1.0530);transform-origin:0 0;-webkit-text-stroke:0.25px #2f5496;">0,92</div>
<div class="t" style="left:1405.74px;top:514.51px;font-size:11.2px;font-weight:700;color:#2f5496;transform:scaleX(1.0530);transform-origin:0 0;-webkit-text-stroke:0.25px #2f5496;">0,93</div>
<svg style="position:absolute;left:603.3583333333333px;top:503px;" width="6" height="5" viewBox="0 0 6 5"><path d="M0 0h6L0 5z" fill="#12871a"/></svg>
<svg style="position:absolute;left:680.9166666666666px;top:503px;" width="6" height="5" viewBox="0 0 6 5"><path d="M0 0h6L0 5z" fill="#12871a"/></svg>
<svg style="position:absolute;left:758.4749999999999px;top:503px;" width="6" height="5" viewBox="0 0 6 5"><path d="M0 0h6L0 5z" fill="#12871a"/></svg>
<svg style="position:absolute;left:836.0333333333333px;top:503px;" width="6" height="5" viewBox="0 0 6 5"><path d="M0 0h6L0 5z" fill="#12871a"/></svg>
<svg style="position:absolute;left:913.5916666666667px;top:503px;" width="6" height="5" viewBox="0 0 6 5"><path d="M0 0h6L0 5z" fill="#12871a"/></svg>
<svg style="position:absolute;left:991.15px;top:503px;" width="6" height="5" viewBox="0 0 6 5"><path d="M0 0h6L0 5z" fill="#12871a"/></svg>
<svg style="position:absolute;left:1068.7083333333333px;top:503px;" width="6" height="5" viewBox="0 0 6 5"><path d="M0 0h6L0 5z" fill="#12871a"/></svg>
<svg style="position:absolute;left:1146.2666666666667px;top:503px;" width="6" height="5" viewBox="0 0 6 5"><path d="M0 0h6L0 5z" fill="#12871a"/></svg>
<svg style="position:absolute;left:1223.825px;top:503px;" width="6" height="5" viewBox="0 0 6 5"><path d="M0 0h6L0 5z" fill="#12871a"/></svg>
<svg style="position:absolute;left:1301.3833333333332px;top:503px;" width="6" height="5" viewBox="0 0 6 5"><path d="M0 0h6L0 5z" fill="#12871a"/></svg>
<div class="t" style="left:179.88px;top:677.82px;font-size:11.2px;font-weight:700;color:#2f5496;transform:scaleX(1.0500);transform-origin:0 0;-webkit-text-stroke:0.25px #2f5496;">9</div>
<div class="t" style="left:212.40px;top:677.88px;font-size:11.6px;color:#2f55a4;transform:scaleX(0.9632);transform-origin:0 0;-webkit-text-stroke:0.4px #2f55a4;">Project Management</div>
<div class="t" style="left:336.95px;top:677.82px;font-size:11.2px;font-weight:700;color:#2f5496;transform:scaleX(1.0644);transform-origin:0 0;-webkit-text-stroke:0.25px #2f5496;">On-Time Delivery Rate</div>
<div class="t" style="left:498.67px;top:677.82px;font-size:11.2px;font-weight:700;color:#2f5496;transform:scaleX(1.0500);transform-origin:0 0;-webkit-text-stroke:0.25px #2f5496;">%</div>
<div class="t" style="left:552.60px;top:677.82px;font-size:11.2px;font-weight:700;color:#2f5496;transform:scaleX(1.0530);transform-origin:0 0;-webkit-text-stroke:0.25px #2f5496;">0,80</div>
<div class="t" style="left:630.16px;top:677.82px;font-size:11.2px;font-weight:700;color:#2f5496;transform:scaleX(1.0530);transform-origin:0 0;-webkit-text-stroke:0.25px #2f5496;">0,81</div>
<div class="t" style="left:707.72px;top:677.82px;font-size:11.2px;font-weight:700;color:#2f5496;transform:scaleX(1.0530);transform-origin:0 0;-webkit-text-stroke:0.25px #2f5496;">0,81</div>
<div class="t" style="left:785.28px;top:677.82px;font-size:11.2px;font-weight:700;color:#2f5496;transform:scaleX(1.0530);transform-origin:0 0;-webkit-text-stroke:0.25px #2f5496;">0,82</div>
<div class="t" style="left:862.84px;top:677.82px;font-size:11.2px;font-weight:700;color:#2f5496;transform:scaleX(1.0530);transform-origin:0 0;-webkit-text-stroke:0.25px #2f5496;">0,82</div>
<div class="t" style="left:940.39px;top:677.82px;font-size:11.2px;font-weight:700;color:#2f5496;transform:scaleX(1.0530);transform-origin:0 0;-webkit-text-stroke:0.25px #2f5496;">0,83</div>
<div class="t" style="left:1017.95px;top:677.82px;font-size:11.2px;font-weight:700;color:#2f5496;transform:scaleX(1.0530);transform-origin:0 0;-webkit-text-stroke:0.25px #2f5496;">0,83</div>
<div class="t" style="left:1095.51px;top:677.82px;font-size:11.2px;font-weight:700;color:#2f5496;transform:scaleX(1.0530);transform-origin:0 0;-webkit-text-stroke:0.25px #2f5496;">0,84</div>
<div class="t" style="left:1173.07px;top:677.82px;font-size:11.2px;font-weight:700;color:#2f5496;transform:scaleX(1.0530);transform-origin:0 0;-webkit-text-stroke:0.25px #2f5496;">0,84</div>
<div class="t" style="left:1250.63px;top:677.82px;font-size:11.2px;font-weight:700;color:#2f5496;transform:scaleX(1.0530);transform-origin:0 0;-webkit-text-stroke:0.25px #2f5496;">0,85</div>
<div class="t" style="left:1328.19px;top:677.82px;font-size:11.2px;font-weight:700;color:#2f5496;transform:scaleX(1.0530);transform-origin:0 0;-webkit-text-stroke:0.25px #2f5496;">0,85</div>
<div class="t" style="left:1405.74px;top:677.82px;font-size:11.2px;font-weight:700;color:#2f5496;transform:scaleX(1.0530);transform-origin:0 0;-webkit-text-stroke:0.25px #2f5496;">0,86</div>
<svg style="position:absolute;left:603.3583333333333px;top:667px;" width="6" height="5" viewBox="0 0 6 5"><path d="M0 0h6L0 5z" fill="#12871a"/></svg>
<svg style="position:absolute;left:680.9166666666666px;top:667px;" width="6" height="5" viewBox="0 0 6 5"><path d="M0 0h6L0 5z" fill="#12871a"/></svg>
<svg style="position:absolute;left:758.4749999999999px;top:667px;" width="6" height="5" viewBox="0 0 6 5"><path d="M0 0h6L0 5z" fill="#12871a"/></svg>
<svg style="position:absolute;left:836.0333333333333px;top:667px;" width="6" height="5" viewBox="0 0 6 5"><path d="M0 0h6L0 5z" fill="#12871a"/></svg>
<svg style="position:absolute;left:913.5916666666667px;top:667px;" width="6" height="5" viewBox="0 0 6 5"><path d="M0 0h6L0 5z" fill="#12871a"/></svg>
<svg style="position:absolute;left:991.15px;top:667px;" width="6" height="5" viewBox="0 0 6 5"><path d="M0 0h6L0 5z" fill="#12871a"/></svg>
<svg style="position:absolute;left:1068.7083333333333px;top:667px;" width="6" height="5" viewBox="0 0 6 5"><path d="M0 0h6L0 5z" fill="#12871a"/></svg>
<svg style="position:absolute;left:1146.2666666666667px;top:667px;" width="6" height="5" viewBox="0 0 6 5"><path d="M0 0h6L0 5z" fill="#12871a"/></svg>
<svg style="position:absolute;left:1223.825px;top:667px;" width="6" height="5" viewBox="0 0 6 5"><path d="M0 0h6L0 5z" fill="#12871a"/></svg>
<svg style="position:absolute;left:1301.3833333333332px;top:667px;" width="6" height="5" viewBox="0 0 6 5"><path d="M0 0h6L0 5z" fill="#12871a"/></svg>
<div class="t" style="left:176.61px;top:701.15px;font-size:11.2px;font-weight:700;color:#2f5496;transform:scaleX(1.0500);transform-origin:0 0;-webkit-text-stroke:0.25px #2f5496;">10</div>
<div class="t" style="left:212.40px;top:701.21px;font-size:11.6px;color:#2f55a4;transform:scaleX(0.9632);transform-origin:0 0;-webkit-text-stroke:0.4px #2f55a4;">Project Management</div>
<div class="t" style="left:332.20px;top:701.15px;font-size:11.2px;font-weight:700;color:#2f5496;transform:scaleX(1.0559);transform-origin:0 0;-webkit-text-stroke:0.25px #2f5496;">Project Budget Variance</div>
<div class="t" style="left:498.67px;top:701.15px;font-size:11.2px;font-weight:700;color:#2f5496;transform:scaleX(1.0500);transform-origin:0 0;-webkit-text-stroke:0.25px #2f5496;">%</div>
<div class="t" style="left:552.60px;top:704.15px;font-size:11.2px;font-weight:700;color:#2f5496;transform:scaleX(1.0530);transform-origin:0 0;-webkit-text-stroke:0.25px #2f5496;">0,15</div>
<div class="t" style="left:630.16px;top:701.15px;font-size:11.2px;font-weight:700;color:#2f5496;transform:scaleX(1.0530);transform-origin:0 0;-webkit-text-stroke:0.25px #2f5496;">0,15</div>
<div class="t" style="left:707.72px;top:701.15px;font-size:11.2px;font-weight:700;color:#2f5496;transform:scaleX(1.0530);transform-origin:0 0;-webkit-text-stroke:0.25px #2f5496;">0,14</div>
<div class="t" style="left:785.28px;top:701.15px;font-size:11.2px;font-weight:700;color:#2f5496;transform:scaleX(1.0530);transform-origin:0 0;-webkit-text-stroke:0.25px #2f5496;">0,14</div>
<div class="t" style="left:862.84px;top:701.15px;font-size:11.2px;font-weight:700;color:#2f5496;transform:scaleX(1.0530);transform-origin:0 0;-webkit-text-stroke:0.25px #2f5496;">0,13</div>
<div class="t" style="left:940.39px;top:701.15px;font-size:11.2px;font-weight:700;color:#2f5496;transform:scaleX(1.0530);transform-origin:0 0;-webkit-text-stroke:0.25px #2f5496;">0,13</div>
<div class="t" style="left:1017.95px;top:701.15px;font-size:11.2px;font-weight:700;color:#2f5496;transform:scaleX(1.0530);transform-origin:0 0;-webkit-text-stroke:0.25px #2f5496;">0,12</div>
<div class="t" style="left:1095.51px;top:701.15px;font-size:11.2px;font-weight:700;color:#2f5496;transform:scaleX(1.0530);transform-origin:0 0;-webkit-text-stroke:0.25px #2f5496;">0,12</div>
<div class="t" style="left:1173.07px;top:701.15px;font-size:11.2px;font-weight:700;color:#2f5496;transform:scaleX(1.0530);transform-origin:0 0;-webkit-text-stroke:0.25px #2f5496;">0,11</div>
<div class="t" style="left:1250.63px;top:701.15px;font-size:11.2px;font-weight:700;color:#2f5496;transform:scaleX(1.0530);transform-origin:0 0;-webkit-text-stroke:0.25px #2f5496;">0,11</div>
<div class="t" style="left:1328.19px;top:701.15px;font-size:11.2px;font-weight:700;color:#2f5496;transform:scaleX(1.0530);transform-origin:0 0;-webkit-text-stroke:0.25px #2f5496;">0,10</div>
<div class="t" style="left:1405.74px;top:701.15px;font-size:11.2px;font-weight:700;color:#2f5496;transform:scaleX(1.0530);transform-origin:0 0;-webkit-text-stroke:0.25px #2f5496;">0,10</div>
<svg style="position:absolute;left:603.3583333333333px;top:690px;" width="6" height="5" viewBox="0 0 6 5"><path d="M0 0h6L0 5z" fill="#12871a"/></svg>
<svg style="position:absolute;left:680.9166666666666px;top:690px;" width="6" height="5" viewBox="0 0 6 5"><path d="M0 0h6L0 5z" fill="#12871a"/></svg>
<svg style="position:absolute;left:758.4749999999999px;top:690px;" width="6" height="5" viewBox="0 0 6 5"><path d="M0 0h6L0 5z" fill="#12871a"/></svg>
<svg style="position:absolute;left:836.0333333333333px;top:690px;" width="6" height="5" viewBox="0 0 6 5"><path d="M0 0h6L0 5z" fill="#12871a"/></svg>
<svg style="position:absolute;left:913.5916666666667px;top:690px;" width="6" height="5" viewBox="0 0 6 5"><path d="M0 0h6L0 5z" fill="#12871a"/></svg>
<svg style="position:absolute;left:991.15px;top:690px;" width="6" height="5" viewBox="0 0 6 5"><path d="M0 0h6L0 5z" fill="#12871a"/></svg>
<svg style="position:absolute;left:1068.7083333333333px;top:690px;" width="6" height="5" viewBox="0 0 6 5"><path d="M0 0h6L0 5z" fill="#12871a"/></svg>
<svg style="position:absolute;left:1146.2666666666667px;top:690px;" width="6" height="5" viewBox="0 0 6 5"><path d="M0 0h6L0 5z" fill="#12871a"/></svg>
<svg style="position:absolute;left:1223.825px;top:690px;" width="6" height="5" viewBox="0 0 6 5"><path d="M0 0h6L0 5z" fill="#12871a"/></svg>
<svg style="position:absolute;left:1301.3833333333332px;top:690px;" width="6" height="5" viewBox="0 0 6 5"><path d="M0 0h6L0 5z" fill="#12871a"/></svg>
<div class="t" style="left:176.61px;top:724.48px;font-size:11.2px;font-weight:700;color:#2f5496;transform:scaleX(1.0500);transform-origin:0 0;-webkit-text-stroke:0.25px #2f5496;">11</div>
<div class="t" style="left:212.40px;top:724.54px;font-size:11.6px;color:#2f55a4;transform:scaleX(0.9632);transform-origin:0 0;-webkit-text-stroke:0.4px #2f55a4;">Project Management</div>
<div class="t" style="left:344.35px;top:724.48px;font-size:11.2px;font-weight:700;color:#2f5496;transform:scaleX(1.0440);transform-origin:0 0;-webkit-text-stroke:0.25px #2f5496;">Resource Utilization</div>
<div class="t" style="left:498.67px;top:724.48px;font-size:11.2px;font-weight:700;color:#2f5496;transform:scaleX(1.0500);transform-origin:0 0;-webkit-text-stroke:0.25px #2f5496;">%</div>
<div class="t" style="left:552.60px;top:724.48px;font-size:11.2px;font-weight:700;color:#2f5496;transform:scaleX(1.0530);transform-origin:0 0;-webkit-text-stroke:0.25px #2f5496;">0,75</div>
<div class="t" style="left:630.16px;top:724.48px;font-size:11.2px;font-weight:700;color:#2f5496;transform:scaleX(1.0530);transform-origin:0 0;-webkit-text-stroke:0.25px #2f5496;">0,76</div>
<div class="t" style="left:707.72px;top:724.48px;font-size:11.2px;font-weight:700;color:#2f5496;transform:scaleX(1.0530);transform-origin:0 0;-webkit-text-stroke:0.25px #2f5496;">0,76</div>
<div class="t" style="left:785.28px;top:724.48px;font-size:11.2px;font-weight:700;color:#2f5496;transform:scaleX(1.0530);transform-origin:0 0;-webkit-text-stroke:0.25px #2f5496;">0,77</div>
<div class="t" style="left:862.84px;top:724.48px;font-size:11.2px;font-weight:700;color:#2f5496;transform:scaleX(1.0530);transform-origin:0 0;-webkit-text-stroke:0.25px #2f5496;">0,77</div>
<div class="t" style="left:940.39px;top:724.48px;font-size:11.2px;font-weight:700;color:#2f5496;transform:scaleX(1.0530);transform-origin:0 0;-webkit-text-stroke:0.25px #2f5496;">0,78</div>
<div class="t" style="left:1017.95px;top:724.48px;font-size:11.2px;font-weight:700;color:#2f5496;transform:scaleX(1.0530);transform-origin:0 0;-webkit-text-stroke:0.25px #2f5496;">0,78</div>
<div class="t" style="left:1095.51px;top:724.48px;font-size:11.2px;font-weight:700;color:#2f5496;transform:scaleX(1.0530);transform-origin:0 0;-webkit-text-stroke:0.25px #2f5496;">0,79</div>
<div class="t" style="left:1173.07px;top:724.48px;font-size:11.2px;font-weight:700;color:#2f5496;transform:scaleX(1.0530);transform-origin:0 0;-webkit-text-stroke:0.25px #2f5496;">0,79</div>
<div class="t" style="left:1250.63px;top:724.48px;font-size:11.2px;font-weight:700;color:#2f5496;transform:scaleX(1.0530);transform-origin:0 0;-webkit-text-stroke:0.25px #2f5496;">0,80</div>
<div class="t" style="left:1328.19px;top:724.48px;font-size:11.2px;font-weight:700;color:#2f5496;transform:scaleX(1.0530);transform-origin:0 0;-webkit-text-stroke:0.25px #2f5496;">0,80</div>
<div class="t" style="left:1405.74px;top:724.48px;font-size:11.2px;font-weight:700;color:#2f5496;transform:scaleX(1.0530);transform-origin:0 0;-webkit-text-stroke:0.25px #2f5496;">0,81</div>
<svg style="position:absolute;left:603.3583333333333px;top:713px;" width="6" height="5" viewBox="0 0 6 5"><path d="M0 0h6L0 5z" fill="#12871a"/></svg>
<svg style="position:absolute;left:680.9166666666666px;top:713px;" width="6" height="5" viewBox="0 0 6 5"><path d="M0 0h6L0 5z" fill="#12871a"/></svg>
<svg style="position:absolute;left:758.4749999999999px;top:713px;" width="6" height="5" viewBox="0 0 6 5"><path d="M0 0h6L0 5z" fill="#12871a"/></svg>
<svg style="position:absolute;left:836.0333333333333px;top:713px;" width="6" height="5" viewBox="0 0 6 5"><path d="M0 0h6L0 5z" fill="#12871a"/></svg>
<svg style="position:absolute;left:913.5916666666667px;top:713px;" width="6" height="5" viewBox="0 0 6 5"><path d="M0 0h6L0 5z" fill="#12871a"/></svg>
<svg style="position:absolute;left:991.15px;top:713px;" width="6" height="5" viewBox="0 0 6 5"><path d="M0 0h6L0 5z" fill="#12871a"/></svg>
<svg style="position:absolute;left:1068.7083333333333px;top:713px;" width="6" height="5" viewBox="0 0 6 5"><path d="M0 0h6L0 5z" fill="#12871a"/></svg>
<svg style="position:absolute;left:1146.2666666666667px;top:713px;" width="6" height="5" viewBox="0 0 6 5"><path d="M0 0h6L0 5z" fill="#12871a"/></svg>
<svg style="position:absolute;left:1223.825px;top:713px;" width="6" height="5" viewBox="0 0 6 5"><path d="M0 0h6L0 5z" fill="#12871a"/></svg>
<svg style="position:absolute;left:1301.3833333333332px;top:713px;" width="6" height="5" viewBox="0 0 6 5"><path d="M0 0h6L0 5z" fill="#12871a"/></svg>
<div class="t" style="left:176.61px;top:747.81px;font-size:11.2px;font-weight:700;color:#2f5496;transform:scaleX(1.0500);transform-origin:0 0;-webkit-text-stroke:0.25px #2f5496;">12</div>
<div class="t" style="left:212.40px;top:747.87px;font-size:11.6px;color:#2f55a4;transform:scaleX(0.9632);transform-origin:0 0;-webkit-text-stroke:0.4px #2f55a4;">Project Management</div>
<div class="t" style="left:334.15px;top:747.81px;font-size:11.2px;font-weight:700;color:#2f5496;transform:scaleX(1.0113);transform-origin:0 0;-webkit-text-stroke:0.25px #2f5496;">Scope Change Requests</div>
<div class="t" style="left:500.63px;top:747.81px;font-size:11.2px;font-weight:700;color:#2f5496;transform:scaleX(1.0500);transform-origin:0 0;-webkit-text-stroke:0.25px #2f5496;">#</div>
<div class="t" style="left:549.32px;top:747.81px;font-size:11.2px;font-weight:700;color:#2f5496;transform:scaleX(1.0530);transform-origin:0 0;-webkit-text-stroke:0.25px #2f5496;">13,00</div>
<div class="t" style="left:626.88px;top:747.81px;font-size:11.2px;font-weight:700;color:#2f5496;transform:scaleX(1.0530);transform-origin:0 0;-webkit-text-stroke:0.25px #2f5496;">25,00</div>
<div class="t" style="left:704.44px;top:747.81px;font-size:11.2px;font-weight:700;color:#2f5496;transform:scaleX(1.0530);transform-origin:0 0;-webkit-text-stroke:0.25px #2f5496;">36,00</div>
<div class="t" style="left:782.00px;top:747.81px;font-size:11.2px;font-weight:700;color:#2f5496;transform:scaleX(1.0530);transform-origin:0 0;-webkit-text-stroke:0.25px #2f5496;">46,00</div>
<div class="t" style="left:859.56px;top:747.81px;font-size:11.2px;font-weight:700;color:#2f5496;transform:scaleX(1.0530);transform-origin:0 0;-webkit-text-stroke:0.25px #2f5496;">55,00</div>
<div class="t" style="left:937.11px;top:747.81px;font-size:11.2px;font-weight:700;color:#2f5496;transform:scaleX(1.0530);transform-origin:0 0;-webkit-text-stroke:0.25px #2f5496;">63,00</div>
<div class="t" style="left:1014.67px;top:747.81px;font-size:11.2px;font-weight:700;color:#2f5496;transform:scaleX(1.0530);transform-origin:0 0;-webkit-text-stroke:0.25px #2f5496;">70,00</div>
<div class="t" style="left:1092.23px;top:747.81px;font-size:11.2px;font-weight:700;color:#2f5496;transform:scaleX(1.0530);transform-origin:0 0;-webkit-text-stroke:0.25px #2f5496;">76,00</div>
<div class="t" style="left:1169.79px;top:747.81px;font-size:11.2px;font-weight:700;color:#2f5496;transform:scaleX(1.0530);transform-origin:0 0;-webkit-text-stroke:0.25px #2f5496;">81,00</div>
<div class="t" style="left:1247.35px;top:747.81px;font-size:11.2px;font-weight:700;color:#2f5496;transform:scaleX(1.0530);transform-origin:0 0;-webkit-text-stroke:0.25px #2f5496;">85,00</div>
<div class="t" style="left:1324.91px;top:747.81px;font-size:11.2px;font-weight:700;color:#2f5496;transform:scaleX(1.0530);transform-origin:0 0;-webkit-text-stroke:0.25px #2f5496;">88,00</div>
<div class="t" style="left:1402.46px;top:747.81px;font-size:11.2px;font-weight:700;color:#2f5496;transform:scaleX(1.0530);transform-origin:0 0;-webkit-text-stroke:0.25px #2f5496;">90,00</div>
<svg style="position:absolute;left:603.3583333333333px;top:737px;" width="6" height="5" viewBox="0 0 6 5"><path d="M0 0h6L0 5z" fill="#12871a"/></svg>
<svg style="position:absolute;left:680.9166666666666px;top:737px;" width="6" height="5" viewBox="0 0 6 5"><path d="M0 0h6L0 5z" fill="#12871a"/></svg>
<svg style="position:absolute;left:758.4749999999999px;top:737px;" width="6" height="5" viewBox="0 0 6 5"><path d="M0 0h6L0 5z" fill="#12871a"/></svg>
<svg style="position:absolute;left:836.0333333333333px;top:737px;" width="6" height="5" viewBox="0 0 6 5"><path d="M0 0h6L0 5z" fill="#12871a"/></svg>
<svg style="position:absolute;left:913.5916666666667px;top:737px;" width="6" height="5" viewBox="0 0 6 5"><path d="M0 0h6L0 5z" fill="#12871a"/></svg>
<svg style="position:absolute;left:991.15px;top:737px;" width="6" height="5" viewBox="0 0 6 5"><path d="M0 0h6L0 5z" fill="#12871a"/></svg>
<svg style="position:absolute;left:1068.7083333333333px;top:737px;" width="6" height="5" viewBox="0 0 6 5"><path d="M0 0h6L0 5z" fill="#12871a"/></svg>
<svg style="position:absolute;left:1146.2666666666667px;top:737px;" width="6" height="5" viewBox="0 0 6 5"><path d="M0 0h6L0 5z" fill="#12871a"/></svg>
<svg style="position:absolute;left:1223.825px;top:737px;" width="6" height="5" viewBox="0 0 6 5"><path d="M0 0h6L0 5z" fill="#12871a"/></svg>
<svg style="position:absolute;left:1301.3833333333332px;top:737px;" width="6" height="5" viewBox="0 0 6 5"><path d="M0 0h6L0 5z" fill="#12871a"/></svg>
<div class="t" style="left:160.00px;top:146.34px;font-size:14.3px;font-weight:700;color:#0d0d0d;transform:scaleX(1.0186);transform-origin:0 0;">2.1 Cumulative Actual Board</div>
<div style="position:absolute;left:148.60px;top:198.80px;width:9.20px;height:24.60px;border:2px solid #217346;border-top:none;box-sizing:border-box;"></div>
<div style="position:absolute;left:154.60px;top:220.60px;width:4.60px;height:4.60px;background:#217346;outline:1px solid #fff;"></div>
<div style="position:absolute;left:0;top:0;width:1578px;height:854px;overflow:hidden;pointer-events:none">
<div style="position:absolute;left:1474.00px;top:161.00px;width:130.00px;height:143.30px;background:#d6dce4;box-shadow:-1px 1px 5px rgba(0,0,0,0.45);"></div>
<div style="position:absolute;left:1474.00px;top:198.60px;width:104.00px;height:1.00px;background:#8e8e8e;"></div>
<div class="t" style="left:1477.90px;top:173.73px;font-size:10.3px;font-weight:700;font-style:italic;color:#262626;">ACTUAL YEAR</div>
<div class="t" style="left:1477.90px;top:186.23px;font-size:10.3px;font-weight:700;font-style:italic;color:#262626;">CUMULATIVE BOARD</div>
<div style="position:absolute;left:1478px;top:216.5px;width:3px;height:3px;border-radius:50%;background:#262626"></div>
<div style="position:absolute;left:1478px;top:260.3px;width:3px;height:3px;border-radius:50%;background:#262626"></div>
<div class="t" style="left:1487.90px;top:218.96px;font-size:10.8px;font-style:italic;color:#262626;">You may check your</div>
<div class="t" style="left:1487.90px;top:231.56px;font-size:10.8px;font-style:italic;color:#262626;">of each criteria from</div>
<div class="t" style="left:1487.90px;top:244.26px;font-size:10.8px;font-style:italic;color:#262626;">by month.</div>
<div class="t" style="left:1487.90px;top:262.26px;font-size:10.8px;font-style:italic;color:#262626;"><b>DO NOT</b> Forget to check</div>
<div class="t" style="left:1487.90px;top:275.26px;font-size:10.8px;font-style:italic;color:#262626;text-decoration:underline;">Cumulative Method</div>
<div class="t" style="left:1487.90px;top:287.96px;font-size:10.8px;font-style:italic;color:#262626;text-decoration:underline;">Settings Sheet</div>
</div>
<div class="t" style="left:10.00px;top:190.51px;font-size:11.5px;font-weight:700;color:#ffffff;">IT KPI Dashboard</div>
<div style="position:absolute;left:0;top:0;width:148px;height:854px;overflow:hidden;">
<div class="t" style="left:18.75px;top:211.67px;font-size:12.2px;color:#f0f0f0;-webkit-text-stroke:0.2px #f0f0f0;">1. Metric Settings</div>
<div class="t" style="left:27.00px;top:235.00px;font-size:12.2px;color:#f0f0f0;transform:scaleX(0.9875);transform-origin:0 0;-webkit-text-stroke:0.2px #f0f0f0;">1.1 Actual Database</div>
<div class="t" style="left:27.00px;top:258.33px;font-size:12.2px;color:#f0f0f0;transform:scaleX(0.9823);transform-origin:0 0;-webkit-text-stroke:0.2px #f0f0f0;">1.2 Target Database</div>
<div class="t" style="left:18.75px;top:281.66px;font-size:12.2px;color:#f0f0f0;transform:scaleX(0.9839);transform-origin:0 0;-webkit-text-stroke:0.2px #f0f0f0;">2. Cumulative Results</div>
<div class="t" style="left:26.80px;top:304.99px;font-size:12.2px;font-weight:700;color:#ffffff;transform:scaleX(0.9900);transform-origin:0 0;">2.1 Actual Cum. Board</div>
<div class="t" style="left:26.80px;top:328.32px;font-size:12.2px;color:#f0f0f0;transform:scaleX(0.9686);transform-origin:0 0;-webkit-text-stroke:0.2px #f0f0f0;">2.2 Target Cum. Board</div>
<div class="t" style="left:18.30px;top:351.65px;font-size:12.2px;color:#f0f0f0;transform:scaleX(0.9481);transform-origin:0 0;-webkit-text-stroke:0.2px #f0f0f0;">3. KPI Dashboard</div>
<div class="t" style="left:18.30px;top:374.98px;font-size:12.2px;color:#f0f0f0;transform:scaleX(1.0095);transform-origin:0 0;-webkit-text-stroke:0.2px #f0f0f0;">4. Metric Analysis</div>
<div class="t" style="left:18.30px;top:513.14px;font-size:12px;font-style:italic;color:#f0f0f0;transform:scaleX(0.9373);transform-origin:0 0;">Terms of Use</div>
</div>
<svg style="position:absolute;left:0px;top:0px;" width="148" height="200" viewBox="0 0 148 200"><g fill="none" stroke="#c9cbce" stroke-width="1"><rect x="32.5" y="136.5" width="14.7" height="9" rx="1.2"/><path d="M32.5 141.3h14.7M32.5 142.8h14.7" stroke-width="0.8"/><rect x="27.3" y="145" width="24.9" height="2.9" rx="1.45" stroke-width="1"/><circle cx="35.8" cy="152.2" r="2.6"/><path d="M33.2 152.2c-3 0-3.8 2-3.8 4.5v3.6"/><path d="M46.5 150.3l-4.6 2.2 4.6 2.3"/><path d="M31.2 157.3c2 2.8 6 3.3 8.2 0.5c-2.2 1-5.2 0.5-8.2-0.5z M48.3 157.3c-2 2.8-6 3.3-8.2 0.5c2.2 1 5.2 0.5 8.2-0.5z" stroke-width="0.9"/></g><text x="18.33" y="141.44" font-size="6" fill="#c9cbce" stroke="#c9cbce" stroke-width="0.15" font-family="Liberation Sans" text-anchor="middle" dominant-baseline="central" transform="rotate(-71.0 18.33 141.44)">S</text><text x="21.14" y="135.91" font-size="6" fill="#c9cbce" stroke="#c9cbce" stroke-width="0.15" font-family="Liberation Sans" text-anchor="middle" dominant-baseline="central" transform="rotate(-55.2 21.14 135.91)">I</text><text x="25.34" y="131.35" font-size="6" fill="#c9cbce" stroke="#c9cbce" stroke-width="0.15" font-family="Liberation Sans" text-anchor="middle" dominant-baseline="central" transform="rotate(-39.4 25.34 131.35)">R</text><text x="30.63" y="128.10" font-size="6" fill="#c9cbce" stroke="#c9cbce" stroke-width="0.15" font-family="Liberation Sans" text-anchor="middle" dominant-baseline="central" transform="rotate(-23.7 30.63 128.10)">E</text><text x="36.60" y="126.41" font-size="6" fill="#c9cbce" stroke="#c9cbce" stroke-width="0.15" font-family="Liberation Sans" text-anchor="middle" dominant-baseline="central" transform="rotate(-7.9 36.60 126.41)">X</text><text x="42.80" y="126.41" font-size="6" fill="#c9cbce" stroke="#c9cbce" stroke-width="0.15" font-family="Liberation Sans" text-anchor="middle" dominant-baseline="central" transform="rotate(7.9 42.80 126.41)">C</text><text x="48.77" y="128.10" font-size="6" fill="#c9cbce" stroke="#c9cbce" stroke-width="0.15" font-family="Liberation Sans" text-anchor="middle" dominant-baseline="central" transform="rotate(23.7 48.77 128.10)">E</text><text x="54.06" y="131.35" font-size="6" fill="#c9cbce" stroke="#c9cbce" stroke-width="0.15" font-family="Liberation Sans" text-anchor="middle" dominant-baseline="central" transform="rotate(39.4 54.06 131.35)">L</text><text x="58.26" y="135.91" font-size="6" fill="#c9cbce" stroke="#c9cbce" stroke-width="0.15" font-family="Liberation Sans" text-anchor="middle" dominant-baseline="central" transform="rotate(55.2 58.26 135.91)">C</text><text x="61.07" y="141.44" font-size="6" fill="#c9cbce" stroke="#c9cbce" stroke-width="0.15" font-family="Liberation Sans" text-anchor="middle" dominant-baseline="central" transform="rotate(71.0 61.07 141.44)">O</text><text x="18.46" y="156.53" font-size="6" fill="#c9cbce" stroke="#c9cbce" stroke-width="0.15" font-family="Liberation Sans" text-anchor="middle" dominant-baseline="central" transform="rotate(70.0 18.46 156.53)">S</text><text x="21.31" y="161.94" font-size="6" fill="#c9cbce" stroke="#c9cbce" stroke-width="0.15" font-family="Liberation Sans" text-anchor="middle" dominant-baseline="central" transform="rotate(54.4 21.31 161.94)">I</text><text x="25.51" y="166.39" font-size="6" fill="#c9cbce" stroke="#c9cbce" stroke-width="0.15" font-family="Liberation Sans" text-anchor="middle" dominant-baseline="central" transform="rotate(38.9 25.51 166.39)">R</text><text x="30.75" y="169.55" font-size="6" fill="#c9cbce" stroke="#c9cbce" stroke-width="0.15" font-family="Liberation Sans" text-anchor="middle" dominant-baseline="central" transform="rotate(23.3 30.75 169.55)">E</text><text x="36.64" y="171.19" font-size="6" fill="#c9cbce" stroke="#c9cbce" stroke-width="0.15" font-family="Liberation Sans" text-anchor="middle" dominant-baseline="central" transform="rotate(7.8 36.64 171.19)">X</text><text x="42.76" y="171.19" font-size="6" fill="#c9cbce" stroke="#c9cbce" stroke-width="0.15" font-family="Liberation Sans" text-anchor="middle" dominant-baseline="central" transform="rotate(-7.8 42.76 171.19)">C</text><text x="48.65" y="169.55" font-size="6" fill="#c9cbce" stroke="#c9cbce" stroke-width="0.15" font-family="Liberation Sans" text-anchor="middle" dominant-baseline="central" transform="rotate(-23.3 48.65 169.55)">E</text><text x="53.89" y="166.39" font-size="6" fill="#c9cbce" stroke="#c9cbce" stroke-width="0.15" font-family="Liberation Sans" text-anchor="middle" dominant-baseline="central" transform="rotate(-38.9 53.89 166.39)">L</text><text x="58.09" y="161.94" font-size="6" fill="#c9cbce" stroke="#c9cbce" stroke-width="0.15" font-family="Liberation Sans" text-anchor="middle" dominant-baseline="central" transform="rotate(-54.4 58.09 161.94)">C</text><text x="60.94" y="156.53" font-size="6" fill="#c9cbce" stroke="#c9cbce" stroke-width="0.15" font-family="Liberation Sans" text-anchor="middle" dominant-baseline="central" transform="rotate(-70.0 60.94 156.53)">O</text><circle cx="16.3" cy="148.8" r="1.5" fill="#c9cbce"/><circle cx="63.1" cy="148.8" r="1.5" fill="#c9cbce"/></svg>
<div style="position:absolute;left:1581.00px;top:111.20px;width:17.00px;height:687.30px;background:#f6f6f6;border-radius:8.5px;"></div>
<svg style="position:absolute;left:1584px;top:115px;" width="12" height="9" viewBox="0 0 12 9"><path d="M6 1L10.5 7.5h-9z" fill="#707070" stroke="#707070" stroke-width="1" stroke-linejoin="round"/></svg>
<div style="position:absolute;left:1585.00px;top:128.00px;width:9.20px;height:303.00px;background:#707070;border-radius:4.6px;"></div>
<svg style="position:absolute;left:1584px;top:786px;" width="12" height="9" viewBox="0 0 12 9"><path d="M6 8L10.5 1.5h-9z" fill="#707070" stroke="#707070" stroke-width="1" stroke-linejoin="round"/></svg>
<div style="position:absolute;left:0.00px;top:797.40px;width:1600.00px;height:33.60px;background:#ece7e7;"></div>
<svg style="position:absolute;left:23px;top:806px;" width="12" height="14" viewBox="0 0 12 14"><path d="M9.5 2L3.8 7l5.7 5" fill="none" stroke="#8a8a8a" stroke-width="1.1"/></svg>
<svg style="position:absolute;left:57px;top:806px;" width="12" height="14" viewBox="0 0 12 14"><path d="M3 1.5L9 7l-6 5.5" fill="none" stroke="#3a3a3a" stroke-width="1.3"/></svg>
<div style="position:absolute;left:118.00px;top:801.80px;width:118.60px;height:24.40px;background:#c2c2c2;border-radius:5px;"></div>
<div class="t" style="left:128.50px;top:815.10px;font-size:15px;color:#1f1f1f;transform:scaleX(0.9461);transform-origin:0 0;">Metric_Settings</div>
<div style="position:absolute;left:241.30px;top:806.00px;width:1.00px;height:17.00px;background:#d8d3d3;"></div>
<div style="position:absolute;left:246.00px;top:801.80px;width:125.60px;height:24.40px;background:#dce3f2;border-radius:5px;"></div>
<div class="t" style="left:256.30px;top:815.10px;font-size:15px;color:#1f1f1f;transform:scaleX(0.9278);transform-origin:0 0;">Actual_Database</div>
<div style="position:absolute;left:376.30px;top:806.00px;width:1.00px;height:17.00px;background:#d8d3d3;"></div>
<div style="position:absolute;left:381.00px;top:801.80px;width:126.30px;height:24.40px;background:#dce3f2;border-radius:5px;"></div>
<div class="t" style="left:391.70px;top:815.10px;font-size:15px;color:#1f1f1f;transform:scaleX(0.9171);transform-origin:0 0;">Target_Database</div>
<div style="position:absolute;left:512.40px;top:806.00px;width:1.00px;height:17.00px;background:#d8d3d3;"></div>
<div style="position:absolute;left:517.50px;top:797.80px;width:138.00px;height:28.20px;background:linear-gradient(#ffffff,#f4f4f4);border-radius:5px;box-shadow:0 1px 2px rgba(0,0,0,0.25);"></div>
<div class="t" style="left:525.40px;top:811.40px;font-size:15px;color:#1a1a1a;transform:scaleX(0.9747);transform-origin:0 0;">Cumulative_Actual</div>
<div style="position:absolute;left:525.40px;top:822.20px;width:121.90px;height:2.00px;background:#1e7a3c;border-radius:1px;"></div>
<div style="position:absolute;left:661.00px;top:806.00px;width:1.00px;height:17.00px;background:#d8d3d3;"></div>
<div style="position:absolute;left:665.30px;top:801.80px;width:139.70px;height:24.40px;background:#a5a5a5;border-radius:5px;"></div>
<div class="t" style="left:676.00px;top:815.10px;font-size:15px;color:#1f1f1f;transform:scaleX(0.9438);transform-origin:0 0;">Cumulative_Target</div>
<div style="position:absolute;left:809.40px;top:806.00px;width:1.00px;height:17.00px;background:#d8d3d3;"></div>
<div style="position:absolute;left:814.2px;top:801.6px;width:65.8px;height:24.9px;overflow:hidden;border-radius:5px 0 0 5px;background:#7030a0">
<div class="t" style="left:10.5px;top:13.50px;font-size:15px;color:#fff;">Metric_Analysis</div>
</div>
<svg style="position:absolute;left:889px;top:810px;" width="14" height="6" viewBox="0 0 14 6"><circle cx="2" cy="3" r="1.5" fill="#333"/><circle cx="7" cy="3" r="1.5" fill="#333"/><circle cx="12" cy="3" r="1.5" fill="#333"/></svg>
<svg style="position:absolute;left:922px;top:806px;" width="14" height="14" viewBox="0 0 14 14"><path d="M7 1v12M1 7h12" stroke="#333" stroke-width="1.4"/></svg>
<svg style="position:absolute;left:961px;top:807px;" width="5" height="14" viewBox="0 0 5 14"><circle cx="2.5" cy="2" r="1.3" fill="#333"/><circle cx="2.5" cy="7" r="1.3" fill="#333"/><circle cx="2.5" cy="12" r="1.3" fill="#333"/></svg>
<div style="position:absolute;left:980.00px;top:805.00px;width:599.00px;height:17.80px;background:#f6f6f6;border-radius:9px;"></div>
<svg style="position:absolute;left:984px;top:808px;" width="10" height="12" viewBox="0 0 10 12"><path d="M2 6L8 1.5v9z" fill="#707070" stroke="#707070" stroke-width="1" stroke-linejoin="round"/></svg>
<div style="position:absolute;left:996.80px;top:808.90px;width:306.40px;height:9.30px;background:#707070;border-radius:4.6px;"></div>
<svg style="position:absolute;left:1565px;top:808px;" width="10" height="12" viewBox="0 0 10 12"><path d="M8 6L2 1.5v9z" fill="#707070" stroke="#707070" stroke-width="1" stroke-linejoin="round"/></svg>
<div style="position:absolute;left:0.00px;top:831.00px;width:1600.00px;height:23.00px;background:#f4f4f4;"></div>
<div class="t" style="left:12.00px;top:842.54px;font-size:12px;color:#333333;transform:scaleX(0.8533);transform-origin:0 0;-webkit-text-stroke:0.15px #333;">Ready</div>
<svg style="position:absolute;left:0px;top:0px;" width="1" height="1" viewBox="0 0 1 1"></svg>
<svg style="position:absolute;left:0;top:0;overflow:visible" width="1" height="1"><g fill="none" stroke="#333" stroke-width="1.1"><path d="M63.2 848.2V836.7h13.7v4"/><path d="M63.2 837.6h13.7" stroke-width="1.6"/><path d="M63.2 848.2h4"/><path d="M65.6 840.5v5.5" stroke-width="0.8" stroke="#888"/><circle cx="72.5" cy="845" r="3.9" fill="#f4f4f4" stroke-width="1.1"/></g><circle cx="72.5" cy="845" r="1.7" fill="#222"/><g fill="none" stroke="#2a2a2a" stroke-width="1"><circle cx="102.3" cy="837.3" r="1.6"/><path d="M96.8 839.2c0.4-1.3 1.6-1.1 2.4-0.3l1.6 1.2h3l1.6-1.2c0.8-0.8 2-1 2.4 0.3c0.2 0.8-0.6 1.4-1.6 1.9l-2 1.1"/><path d="M96.8 839.2c0 0.8 0.9 1.4 1.9 1.9l2 1.1v2.8l-1.5 3.8c-0.3 1 0.9 1.6 1.5 0.7l2.2-3.6"/><path d="M103.6 843.3l6.8 6.8M110.4 843.3l-6.8 6.8" stroke-width="0.9"/></g></svg>
<div class="t" style="left:114.60px;top:843.14px;font-size:12px;font-weight:700;color:#242424;transform:scaleX(0.8794);transform-origin:0 0;">Accessibility: Investigate</div>
<div style="position:absolute;left:1290.00px;top:831.60px;width:42.00px;height:22.40px;background:#e1e1e1;"></div>
<svg style="position:absolute;left:1302px;top:834px;" width="16" height="16" viewBox="0 0 16 16"><rect x="1.5" y="1.5" width="13" height="13" fill="none" stroke="#333" stroke-width="1.3"/><path d="M5.8 1.5v13M10.2 1.5v13M1.5 5.8h13M1.5 10.2h13" stroke="#333" stroke-width="1.3"/></svg>
<svg style="position:absolute;left:1344px;top:834px;" width="17" height="16" viewBox="0 0 17 16"><rect x="1.5" y="1.5" width="14" height="13" fill="none" stroke="#444" stroke-width="1.2"/><rect x="5" y="4" width="7" height="8" fill="none" stroke="#444" stroke-width="1"/><path d="M6.5 6.5h4M6.5 8.5h4" stroke="#444" stroke-width="0.8"/></svg>
<svg style="position:absolute;left:1386px;top:834px;" width="17" height="16" viewBox="0 0 17 16"><path d="M1.5 14.5v-13h14v13z" fill="none" stroke="#444" stroke-width="1.2"/><path d="M1.5 8.5h6v-7M10.5 1.5v5" fill="none" stroke="#444" stroke-width="1.2"/></svg>
<div style="position:absolute;left:1421.00px;top:841.20px;width:8.00px;height:1.30px;background:#444;"></div>
<div style="position:absolute;left:1434.00px;top:841.90px;width:104.00px;height:1.00px;background:#777;"></div>
<div style="position:absolute;left:1476.00px;top:837.00px;width:5.00px;height:10.60px;background:#555;border-radius:1px;"></div>
<div style="position:absolute;left:1485.70px;top:838.50px;width:1.00px;height:7.50px;background:#777;"></div>
<svg style="position:absolute;left:1542px;top:837px;" width="11" height="11" viewBox="0 0 11 11"><path d="M5.5 1v9M1 5.5h9" stroke="#444" stroke-width="1.3"/></svg>
<div class="t" style="left:1565.60px;top:842.41px;font-size:11.5px;color:#3d3d3d;transform:scaleX(0.8689);transform-origin:0 0;">%85</div>
</body></html>
